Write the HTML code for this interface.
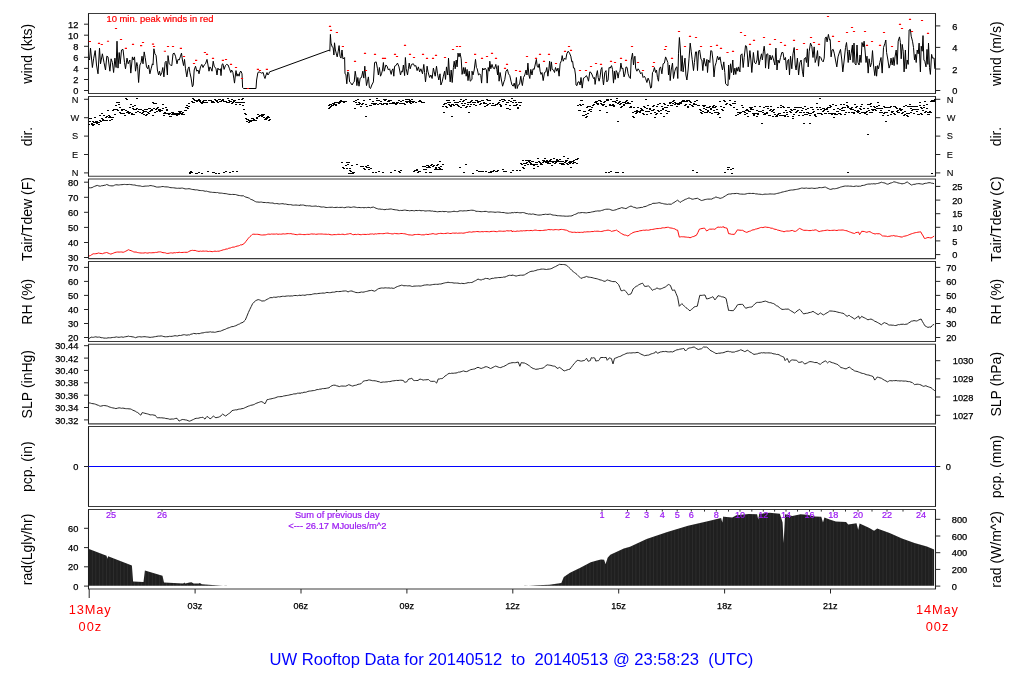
<!DOCTYPE html>
<html><head><meta charset="utf-8"><title>UW Rooftop Data</title>
<style>
html,body{margin:0;padding:0;background:#fff;}
svg{display:block;will-change:transform;opacity:0.999;font-family:"Liberation Sans",sans-serif;}
text{white-space:pre;font-kerning:none;}
</style></head><body>
<svg width="1024" height="700" viewBox="0 0 1024 700">
<defs>
<pattern id="bars" x="89.2" y="0" width="3.53" height="10" patternUnits="userSpaceOnUse">
<rect x="0" y="0" width="3.53" height="10" fill="#1f1f1f"/>
<rect x="2.95" y="0" width="0.58" height="10" fill="#343434"/>
</pattern>
</defs>
<rect x="0" y="0" width="1024" height="700" fill="#fff"/>
<path d="M88.0 13.50H936.0M88.0 93.50H936.0" fill="none" stroke="#3c3c3c" stroke-width="1.05"/>
<path d="M88.5 13.50V93.50M935.5 13.50V93.50" fill="none" stroke="#1c1c1c" stroke-width="1.05"/>
<path d="M88.0 96.50H936.0M88.0 176.30H936.0" fill="none" stroke="#3c3c3c" stroke-width="1.05"/>
<path d="M88.5 96.50V176.30M935.5 96.50V176.30" fill="none" stroke="#1c1c1c" stroke-width="1.05"/>
<path d="M88.0 179.00H936.0M88.0 258.60H936.0" fill="none" stroke="#3c3c3c" stroke-width="1.05"/>
<path d="M88.5 179.00V258.60M935.5 179.00V258.60" fill="none" stroke="#1c1c1c" stroke-width="1.05"/>
<path d="M88.0 261.50H936.0M88.0 341.45H936.0" fill="none" stroke="#3c3c3c" stroke-width="1.05"/>
<path d="M88.5 261.50V341.45M935.5 261.50V341.45" fill="none" stroke="#1c1c1c" stroke-width="1.05"/>
<path d="M88.0 344.20H936.0M88.0 423.85H936.0" fill="none" stroke="#3c3c3c" stroke-width="1.05"/>
<path d="M88.5 344.20V423.85M935.5 344.20V423.85" fill="none" stroke="#1c1c1c" stroke-width="1.05"/>
<path d="M88.0 426.50H936.0M88.0 506.45H936.0" fill="none" stroke="#3c3c3c" stroke-width="1.05"/>
<path d="M88.5 426.50V506.45M935.5 426.50V506.45" fill="none" stroke="#1c1c1c" stroke-width="1.05"/>
<path d="M88.0 509.40H936.0M88.0 589.00H936.0" fill="none" stroke="#3c3c3c" stroke-width="1.05"/>
<path d="M88.5 509.40V589.00M935.5 509.40V589.00" fill="none" stroke="#1c1c1c" stroke-width="1.05"/>
<path d="M84 90.5H88.5" stroke="#262626" stroke-width="1"/>
<text x="78.40" y="94.10" font-size="8.80" fill="#000" text-anchor="end" textLength="5.16" lengthAdjust="spacingAndGlyphs" stroke="#000" stroke-width="0.25">0</text>
<path d="M84 79.5H88.5" stroke="#262626" stroke-width="1"/>
<text x="78.40" y="83.05" font-size="8.80" fill="#000" text-anchor="end" textLength="5.16" lengthAdjust="spacingAndGlyphs" stroke="#000" stroke-width="0.25">2</text>
<path d="M84 68.4H88.5" stroke="#262626" stroke-width="1"/>
<text x="78.40" y="72.00" font-size="8.80" fill="#000" text-anchor="end" textLength="5.16" lengthAdjust="spacingAndGlyphs" stroke="#000" stroke-width="0.25">4</text>
<path d="M84 57.3H88.5" stroke="#262626" stroke-width="1"/>
<text x="78.40" y="60.95" font-size="8.80" fill="#000" text-anchor="end" textLength="5.16" lengthAdjust="spacingAndGlyphs" stroke="#000" stroke-width="0.25">6</text>
<path d="M84 46.3H88.5" stroke="#262626" stroke-width="1"/>
<text x="78.40" y="49.90" font-size="8.80" fill="#000" text-anchor="end" textLength="5.16" lengthAdjust="spacingAndGlyphs" stroke="#000" stroke-width="0.25">8</text>
<path d="M84 35.2H88.5" stroke="#262626" stroke-width="1"/>
<text x="78.40" y="38.85" font-size="8.80" fill="#000" text-anchor="end" textLength="10.33" lengthAdjust="spacingAndGlyphs" stroke="#000" stroke-width="0.25">10</text>
<path d="M84 24.2H88.5" stroke="#262626" stroke-width="1"/>
<text x="78.40" y="27.80" font-size="8.80" fill="#000" text-anchor="end" textLength="10.33" lengthAdjust="spacingAndGlyphs" stroke="#000" stroke-width="0.25">12</text>
<path d="M935.5 25.9H940.3" stroke="#262626" stroke-width="1"/>
<text x="952.20" y="29.50" font-size="8.80" fill="#000" text-anchor="start" textLength="5.16" lengthAdjust="spacingAndGlyphs" stroke="#000" stroke-width="0.25">6</text>
<path d="M935.5 47.4H940.3" stroke="#262626" stroke-width="1"/>
<text x="952.20" y="51.00" font-size="8.80" fill="#000" text-anchor="start" textLength="5.16" lengthAdjust="spacingAndGlyphs" stroke="#000" stroke-width="0.25">4</text>
<path d="M935.5 69.0H940.3" stroke="#262626" stroke-width="1"/>
<text x="952.20" y="72.60" font-size="8.80" fill="#000" text-anchor="start" textLength="5.16" lengthAdjust="spacingAndGlyphs" stroke="#000" stroke-width="0.25">2</text>
<path d="M935.5 90.5H940.3" stroke="#262626" stroke-width="1"/>
<text x="952.20" y="94.10" font-size="8.80" fill="#000" text-anchor="start" textLength="5.16" lengthAdjust="spacingAndGlyphs" stroke="#000" stroke-width="0.25">0</text>
<path d="M84 99.3H88.5" stroke="#262626" stroke-width="1"/>
<text x="75.00" y="102.50" font-size="8.80" fill="#000" text-anchor="middle" textLength="6.70" lengthAdjust="spacingAndGlyphs" stroke="#000" stroke-width="0.08">N</text>
<path d="M935.5 99.3H940.3" stroke="#262626" stroke-width="1"/>
<text x="946.80" y="102.50" font-size="8.80" fill="#000" text-anchor="start" textLength="6.70" lengthAdjust="spacingAndGlyphs" stroke="#000" stroke-width="0.08">N</text>
<path d="M84 117.7H88.5" stroke="#262626" stroke-width="1"/>
<text x="75.00" y="120.90" font-size="8.80" fill="#000" text-anchor="middle" textLength="8.76" lengthAdjust="spacingAndGlyphs" stroke="#000" stroke-width="0.08">W</text>
<path d="M935.5 117.7H940.3" stroke="#262626" stroke-width="1"/>
<text x="946.80" y="120.90" font-size="8.80" fill="#000" text-anchor="start" textLength="8.76" lengthAdjust="spacingAndGlyphs" stroke="#000" stroke-width="0.08">W</text>
<path d="M84 136.1H88.5" stroke="#262626" stroke-width="1"/>
<text x="75.00" y="139.30" font-size="8.80" fill="#000" text-anchor="middle" textLength="6.19" lengthAdjust="spacingAndGlyphs" stroke="#000" stroke-width="0.08">S</text>
<path d="M935.5 136.1H940.3" stroke="#262626" stroke-width="1"/>
<text x="946.80" y="139.30" font-size="8.80" fill="#000" text-anchor="start" textLength="6.19" lengthAdjust="spacingAndGlyphs" stroke="#000" stroke-width="0.08">S</text>
<path d="M84 154.5H88.5" stroke="#262626" stroke-width="1"/>
<text x="75.00" y="157.70" font-size="8.80" fill="#000" text-anchor="middle" textLength="6.19" lengthAdjust="spacingAndGlyphs" stroke="#000" stroke-width="0.08">E</text>
<path d="M935.5 154.5H940.3" stroke="#262626" stroke-width="1"/>
<text x="946.80" y="157.70" font-size="8.80" fill="#000" text-anchor="start" textLength="6.19" lengthAdjust="spacingAndGlyphs" stroke="#000" stroke-width="0.08">E</text>
<path d="M84 172.9H88.5" stroke="#262626" stroke-width="1"/>
<text x="75.00" y="176.10" font-size="8.80" fill="#000" text-anchor="middle" textLength="6.70" lengthAdjust="spacingAndGlyphs" stroke="#000" stroke-width="0.08">N</text>
<path d="M935.5 172.9H940.3" stroke="#262626" stroke-width="1"/>
<text x="946.80" y="176.10" font-size="8.80" fill="#000" text-anchor="start" textLength="6.70" lengthAdjust="spacingAndGlyphs" stroke="#000" stroke-width="0.08">N</text>
<path d="M84 182.2H88.5" stroke="#262626" stroke-width="1"/>
<text x="78.40" y="185.80" font-size="8.80" fill="#000" text-anchor="end" textLength="10.33" lengthAdjust="spacingAndGlyphs" stroke="#000" stroke-width="0.25">80</text>
<path d="M84 197.3H88.5" stroke="#262626" stroke-width="1"/>
<text x="78.40" y="200.87" font-size="8.80" fill="#000" text-anchor="end" textLength="10.33" lengthAdjust="spacingAndGlyphs" stroke="#000" stroke-width="0.25">70</text>
<path d="M84 212.3H88.5" stroke="#262626" stroke-width="1"/>
<text x="78.40" y="215.94" font-size="8.80" fill="#000" text-anchor="end" textLength="10.33" lengthAdjust="spacingAndGlyphs" stroke="#000" stroke-width="0.25">60</text>
<path d="M84 227.4H88.5" stroke="#262626" stroke-width="1"/>
<text x="78.40" y="231.01" font-size="8.80" fill="#000" text-anchor="end" textLength="10.33" lengthAdjust="spacingAndGlyphs" stroke="#000" stroke-width="0.25">50</text>
<path d="M84 242.5H88.5" stroke="#262626" stroke-width="1"/>
<text x="78.40" y="246.08" font-size="8.80" fill="#000" text-anchor="end" textLength="10.33" lengthAdjust="spacingAndGlyphs" stroke="#000" stroke-width="0.25">40</text>
<path d="M84 257.5H88.5" stroke="#262626" stroke-width="1"/>
<text x="78.40" y="261.15" font-size="8.80" fill="#000" text-anchor="end" textLength="10.33" lengthAdjust="spacingAndGlyphs" stroke="#000" stroke-width="0.25">30</text>
<path d="M935.5 186.4H940.3" stroke="#262626" stroke-width="1"/>
<text x="952.20" y="190.00" font-size="8.80" fill="#000" text-anchor="start" textLength="10.33" lengthAdjust="spacingAndGlyphs" stroke="#000" stroke-width="0.25">25</text>
<path d="M935.5 200.1H940.3" stroke="#262626" stroke-width="1"/>
<text x="952.20" y="203.70" font-size="8.80" fill="#000" text-anchor="start" textLength="10.33" lengthAdjust="spacingAndGlyphs" stroke="#000" stroke-width="0.25">20</text>
<path d="M935.5 213.7H940.3" stroke="#262626" stroke-width="1"/>
<text x="952.20" y="217.30" font-size="8.80" fill="#000" text-anchor="start" textLength="10.33" lengthAdjust="spacingAndGlyphs" stroke="#000" stroke-width="0.25">15</text>
<path d="M935.5 227.3H940.3" stroke="#262626" stroke-width="1"/>
<text x="952.20" y="230.90" font-size="8.80" fill="#000" text-anchor="start" textLength="10.33" lengthAdjust="spacingAndGlyphs" stroke="#000" stroke-width="0.25">10</text>
<path d="M935.5 240.9H940.3" stroke="#262626" stroke-width="1"/>
<text x="952.20" y="244.50" font-size="8.80" fill="#000" text-anchor="start" textLength="5.16" lengthAdjust="spacingAndGlyphs" stroke="#000" stroke-width="0.25">5</text>
<path d="M935.5 254.6H940.3" stroke="#262626" stroke-width="1"/>
<text x="952.20" y="258.20" font-size="8.80" fill="#000" text-anchor="start" textLength="5.16" lengthAdjust="spacingAndGlyphs" stroke="#000" stroke-width="0.25">0</text>
<path d="M84 267.4H88.5" stroke="#262626" stroke-width="1"/>
<text x="78.40" y="271.00" font-size="8.80" fill="#000" text-anchor="end" textLength="10.33" lengthAdjust="spacingAndGlyphs" stroke="#000" stroke-width="0.25">70</text>
<path d="M935.5 267.4H940.3" stroke="#262626" stroke-width="1"/>
<text x="946.20" y="271.00" font-size="8.80" fill="#000" text-anchor="start" textLength="10.33" lengthAdjust="spacingAndGlyphs" stroke="#000" stroke-width="0.25">70</text>
<path d="M84 281.4H88.5" stroke="#262626" stroke-width="1"/>
<text x="78.40" y="285.02" font-size="8.80" fill="#000" text-anchor="end" textLength="10.33" lengthAdjust="spacingAndGlyphs" stroke="#000" stroke-width="0.25">60</text>
<path d="M935.5 281.4H940.3" stroke="#262626" stroke-width="1"/>
<text x="946.20" y="285.02" font-size="8.80" fill="#000" text-anchor="start" textLength="10.33" lengthAdjust="spacingAndGlyphs" stroke="#000" stroke-width="0.25">60</text>
<path d="M84 295.4H88.5" stroke="#262626" stroke-width="1"/>
<text x="78.40" y="299.04" font-size="8.80" fill="#000" text-anchor="end" textLength="10.33" lengthAdjust="spacingAndGlyphs" stroke="#000" stroke-width="0.25">50</text>
<path d="M935.5 295.4H940.3" stroke="#262626" stroke-width="1"/>
<text x="946.20" y="299.04" font-size="8.80" fill="#000" text-anchor="start" textLength="10.33" lengthAdjust="spacingAndGlyphs" stroke="#000" stroke-width="0.25">50</text>
<path d="M84 309.5H88.5" stroke="#262626" stroke-width="1"/>
<text x="78.40" y="313.06" font-size="8.80" fill="#000" text-anchor="end" textLength="10.33" lengthAdjust="spacingAndGlyphs" stroke="#000" stroke-width="0.25">40</text>
<path d="M935.5 309.5H940.3" stroke="#262626" stroke-width="1"/>
<text x="946.20" y="313.06" font-size="8.80" fill="#000" text-anchor="start" textLength="10.33" lengthAdjust="spacingAndGlyphs" stroke="#000" stroke-width="0.25">40</text>
<path d="M84 323.5H88.5" stroke="#262626" stroke-width="1"/>
<text x="78.40" y="327.08" font-size="8.80" fill="#000" text-anchor="end" textLength="10.33" lengthAdjust="spacingAndGlyphs" stroke="#000" stroke-width="0.25">30</text>
<path d="M935.5 323.5H940.3" stroke="#262626" stroke-width="1"/>
<text x="946.20" y="327.08" font-size="8.80" fill="#000" text-anchor="start" textLength="10.33" lengthAdjust="spacingAndGlyphs" stroke="#000" stroke-width="0.25">30</text>
<path d="M84 337.5H88.5" stroke="#262626" stroke-width="1"/>
<text x="78.40" y="341.10" font-size="8.80" fill="#000" text-anchor="end" textLength="10.33" lengthAdjust="spacingAndGlyphs" stroke="#000" stroke-width="0.25">20</text>
<path d="M935.5 337.5H940.3" stroke="#262626" stroke-width="1"/>
<text x="946.20" y="341.10" font-size="8.80" fill="#000" text-anchor="start" textLength="10.33" lengthAdjust="spacingAndGlyphs" stroke="#000" stroke-width="0.25">20</text>
<path d="M84 345.7H88.5" stroke="#262626" stroke-width="1"/>
<text x="78.40" y="349.30" font-size="8.80" fill="#000" text-anchor="end" textLength="23.23" lengthAdjust="spacingAndGlyphs" stroke="#000" stroke-width="0.25">30.44</text>
<path d="M84 358.1H88.5" stroke="#262626" stroke-width="1"/>
<text x="78.40" y="361.67" font-size="8.80" fill="#000" text-anchor="end" textLength="23.23" lengthAdjust="spacingAndGlyphs" stroke="#000" stroke-width="0.25">30.42</text>
<path d="M84 370.4H88.5" stroke="#262626" stroke-width="1"/>
<text x="78.40" y="374.04" font-size="8.80" fill="#000" text-anchor="end" textLength="23.23" lengthAdjust="spacingAndGlyphs" stroke="#000" stroke-width="0.25">30.40</text>
<path d="M84 382.8H88.5" stroke="#262626" stroke-width="1"/>
<text x="78.40" y="386.41" font-size="8.80" fill="#000" text-anchor="end" textLength="23.23" lengthAdjust="spacingAndGlyphs" stroke="#000" stroke-width="0.25">30.38</text>
<path d="M84 395.2H88.5" stroke="#262626" stroke-width="1"/>
<text x="78.40" y="398.78" font-size="8.80" fill="#000" text-anchor="end" textLength="23.23" lengthAdjust="spacingAndGlyphs" stroke="#000" stroke-width="0.25">30.36</text>
<path d="M84 407.5H88.5" stroke="#262626" stroke-width="1"/>
<text x="78.40" y="411.15" font-size="8.80" fill="#000" text-anchor="end" textLength="23.23" lengthAdjust="spacingAndGlyphs" stroke="#000" stroke-width="0.25">30.34</text>
<path d="M84 419.9H88.5" stroke="#262626" stroke-width="1"/>
<text x="78.40" y="423.52" font-size="8.80" fill="#000" text-anchor="end" textLength="23.23" lengthAdjust="spacingAndGlyphs" stroke="#000" stroke-width="0.25">30.32</text>
<path d="M935.5 360.7H940.3" stroke="#262626" stroke-width="1"/>
<text x="952.80" y="364.30" font-size="8.80" fill="#000" text-anchor="start" textLength="20.65" lengthAdjust="spacingAndGlyphs" stroke="#000" stroke-width="0.25">1030</text>
<path d="M935.5 378.8H940.3" stroke="#262626" stroke-width="1"/>
<text x="952.80" y="382.40" font-size="8.80" fill="#000" text-anchor="start" textLength="20.65" lengthAdjust="spacingAndGlyphs" stroke="#000" stroke-width="0.25">1029</text>
<path d="M935.5 397.0H940.3" stroke="#262626" stroke-width="1"/>
<text x="952.80" y="400.60" font-size="8.80" fill="#000" text-anchor="start" textLength="20.65" lengthAdjust="spacingAndGlyphs" stroke="#000" stroke-width="0.25">1028</text>
<path d="M935.5 415.3H940.3" stroke="#262626" stroke-width="1"/>
<text x="952.80" y="418.90" font-size="8.80" fill="#000" text-anchor="start" textLength="20.65" lengthAdjust="spacingAndGlyphs" stroke="#000" stroke-width="0.25">1027</text>
<path d="M84 466.5H88.5" stroke="#262626" stroke-width="1"/>
<text x="78.40" y="470.10" font-size="8.80" fill="#000" text-anchor="end" textLength="5.16" lengthAdjust="spacingAndGlyphs" stroke="#000" stroke-width="0.25">0</text>
<path d="M935.5 466.5H940.3" stroke="#262626" stroke-width="1"/>
<text x="945.80" y="470.10" font-size="8.80" fill="#000" text-anchor="start" textLength="5.16" lengthAdjust="spacingAndGlyphs" stroke="#000" stroke-width="0.25">0</text>
<path d="M84 528.3H88.5" stroke="#262626" stroke-width="1"/>
<text x="78.40" y="531.90" font-size="8.80" fill="#000" text-anchor="end" textLength="10.33" lengthAdjust="spacingAndGlyphs" stroke="#000" stroke-width="0.25">60</text>
<path d="M84 547.6H88.5" stroke="#262626" stroke-width="1"/>
<text x="78.40" y="551.17" font-size="8.80" fill="#000" text-anchor="end" textLength="10.33" lengthAdjust="spacingAndGlyphs" stroke="#000" stroke-width="0.25">40</text>
<path d="M84 566.8H88.5" stroke="#262626" stroke-width="1"/>
<text x="78.40" y="570.44" font-size="8.80" fill="#000" text-anchor="end" textLength="10.33" lengthAdjust="spacingAndGlyphs" stroke="#000" stroke-width="0.25">20</text>
<path d="M84 586.1H88.5" stroke="#262626" stroke-width="1"/>
<text x="78.40" y="589.71" font-size="8.80" fill="#000" text-anchor="end" textLength="5.16" lengthAdjust="spacingAndGlyphs" stroke="#000" stroke-width="0.25">0</text>
<path d="M935.5 519.3H940.3" stroke="#262626" stroke-width="1"/>
<text x="951.80" y="522.90" font-size="8.80" fill="#000" text-anchor="start" textLength="15.49" lengthAdjust="spacingAndGlyphs" stroke="#000" stroke-width="0.25">800</text>
<path d="M935.5 536.0H940.3" stroke="#262626" stroke-width="1"/>
<text x="951.80" y="539.60" font-size="8.80" fill="#000" text-anchor="start" textLength="15.49" lengthAdjust="spacingAndGlyphs" stroke="#000" stroke-width="0.25">600</text>
<path d="M935.5 552.7H940.3" stroke="#262626" stroke-width="1"/>
<text x="951.80" y="556.30" font-size="8.80" fill="#000" text-anchor="start" textLength="15.49" lengthAdjust="spacingAndGlyphs" stroke="#000" stroke-width="0.25">400</text>
<path d="M935.5 569.4H940.3" stroke="#262626" stroke-width="1"/>
<text x="951.80" y="573.00" font-size="8.80" fill="#000" text-anchor="start" textLength="15.49" lengthAdjust="spacingAndGlyphs" stroke="#000" stroke-width="0.25">200</text>
<path d="M935.5 586.1H940.3" stroke="#262626" stroke-width="1"/>
<text x="951.80" y="589.70" font-size="8.80" fill="#000" text-anchor="start" textLength="5.16" lengthAdjust="spacingAndGlyphs" stroke="#000" stroke-width="0.25">0</text>
<text x="32.00" y="53.70" font-size="14.00" fill="#000" text-anchor="middle" textLength="59.90" lengthAdjust="spacingAndGlyphs" transform="rotate(-90 32.00 53.70)">wind (kts)</text>
<text x="1000.70" y="53.70" font-size="14.00" fill="#000" text-anchor="middle" textLength="64.56" lengthAdjust="spacingAndGlyphs" transform="rotate(-90 1000.70 53.70)">wind (m/s)</text>
<text x="32.00" y="136.60" font-size="14.00" fill="#000" text-anchor="middle" textLength="19.45" lengthAdjust="spacingAndGlyphs" transform="rotate(-90 32.00 136.60)">dir.</text>
<text x="1000.70" y="136.60" font-size="14.00" fill="#000" text-anchor="middle" textLength="19.45" lengthAdjust="spacingAndGlyphs" transform="rotate(-90 1000.70 136.60)">dir.</text>
<text x="32.00" y="219.00" font-size="14.00" fill="#000" text-anchor="middle" textLength="84.00" lengthAdjust="spacingAndGlyphs" transform="rotate(-90 32.00 219.00)">Tair/Tdew (F)</text>
<text x="1000.70" y="219.00" font-size="14.00" fill="#000" text-anchor="middle" textLength="85.56" lengthAdjust="spacingAndGlyphs" transform="rotate(-90 1000.70 219.00)">Tair/Tdew (C)</text>
<text x="32.00" y="301.68" font-size="14.00" fill="#000" text-anchor="middle" textLength="45.88" lengthAdjust="spacingAndGlyphs" transform="rotate(-90 32.00 301.68)">RH (%)</text>
<text x="1000.70" y="301.68" font-size="14.00" fill="#000" text-anchor="middle" textLength="45.88" lengthAdjust="spacingAndGlyphs" transform="rotate(-90 1000.70 301.68)">RH (%)</text>
<text x="32.00" y="384.22" font-size="14.00" fill="#000" text-anchor="middle" textLength="68.47" lengthAdjust="spacingAndGlyphs" transform="rotate(-90 32.00 384.22)">SLP (inHg)</text>
<text x="1000.70" y="384.22" font-size="14.00" fill="#000" text-anchor="middle" textLength="64.59" lengthAdjust="spacingAndGlyphs" transform="rotate(-90 1000.70 384.22)">SLP (hPa)</text>
<text x="32.00" y="466.68" font-size="14.00" fill="#000" text-anchor="middle" textLength="50.57" lengthAdjust="spacingAndGlyphs" transform="rotate(-90 32.00 466.68)">pcp. (in)</text>
<text x="1000.70" y="466.68" font-size="14.00" fill="#000" text-anchor="middle" textLength="63.00" lengthAdjust="spacingAndGlyphs" transform="rotate(-90 1000.70 466.68)">pcp. (mm)</text>
<text x="32.00" y="549.40" font-size="14.00" fill="#000" text-anchor="middle" textLength="71.58" lengthAdjust="spacingAndGlyphs" transform="rotate(-90 32.00 549.40)">rad(Lgly/hr)</text>
<text x="1000.70" y="549.40" font-size="14.00" fill="#000" text-anchor="middle" textLength="76.57" lengthAdjust="spacingAndGlyphs" transform="rotate(-90 1000.70 549.40)">rad (W/m^2)</text>
<path d="M89.5 60.0 L90.5 48.1 L92.4 67.5 L93.6 58.8 L95.2 50.6 L96.5 65.0 L98.0 73.8 L99.5 48.1 L100.5 63.8 L102.4 53.8 L104.0 62.5 L105.5 70.0 L106.8 56.2 L108.0 56.9 L109.9 71.2 L111.1 58.8 L112.4 62.5 L113.6 72.5 L114.9 58.1 L116.1 67.5 L117.0 41.2 L118.0 68.1 L119.2 52.5 L120.2 63.8 L121.5 50.0 L123.0 49.4 L124.5 62.5 L125.5 68.8 L127.0 58.1 L128.2 63.8 L129.9 60.0 L130.8 73.1 L132.4 56.9 L133.2 60.0 L134.5 56.9 L135.5 71.2 L136.8 62.5 L137.6 66.2 L138.6 82.5 L139.9 65.0 L141.1 62.5 L142.0 56.2 L143.0 63.8 L144.2 51.9 L145.2 57.5 L146.5 66.9 L147.8 68.8 L148.6 65.0 L149.9 73.8 L151.1 68.8 L152.4 63.8 L153.0 65.0 L153.9 48.8 L154.9 53.8 L156.1 55.6 L157.4 70.0 L158.6 75.0 L159.5 71.2 L160.5 75.6 L161.8 72.5 L162.8 67.5 L163.9 76.9 L165.1 62.5 L166.1 61.2 L167.4 75.0 L168.0 55.6 L169.2 63.8 L170.5 65.0 L171.8 65.6 L173.0 53.8 L174.2 53.1 L175.5 56.2 L177.0 63.8 L178.0 59.4 L179.2 60.0 L180.5 56.2 L181.5 53.1 L182.4 60.0 L183.6 65.6 L184.5 59.4 L185.5 68.8 L186.8 76.9 L188.0 68.8 L189.0 66.9 L189.9 72.5 L191.1 78.1 L192.4 86.9 L193.2 85.0 L194.2 70.0 L195.5 66.2 L196.8 71.2 L198.0 70.0 L199.0 73.8 L200.5 66.9 L201.8 64.4 L203.0 67.5 L204.2 65.0 L205.5 63.8 L207.0 59.4 L208.0 65.0 L209.0 71.2 L209.9 66.9 L211.1 68.8 L212.0 71.2 L213.2 61.2 L214.2 66.2 L216.0 68.8 L216.0 68.8 L217.0 75.0 L217.9 68.1 L219.1 70.0 L220.4 68.8 L221.0 75.6 L222.0 64.4 L222.9 63.8 L224.1 69.4 L225.4 65.6 L226.6 64.4 L228.1 65.0 L229.5 68.8 L230.8 72.5 L231.6 70.0 L232.9 72.5 L233.8 78.1 L234.5 83.1 L235.4 75.0 L236.0 70.6 L237.0 76.2 L237.9 73.8 L239.1 76.2 L240.0 71.9 L241.0 71.2 L242.0 73.8 L242.6 87.5 L243.5 88.5 L256.0 88.5 L256.6 80.0 L257.9 72.5 L259.1 71.9 L260.4 72.5 L261.6 73.1 L263.2 72.5 L264.1 76.2 L265.0 78.5 L266.0 75.0 L267.0 72.5 L267.9 75.0 L268.8 73.8 L269.5 71.9 L329.1 50.2 L329.8 51.2 L330.4 34.4 L331.0 43.1 L332.2 46.9 L333.1 47.5 L333.9 55.0 L334.5 42.8 L335.4 50.0 L336.2 53.1 L337.2 56.9 L338.2 51.2 L339.1 45.6 L340.0 56.2 L341.0 58.1 L342.0 50.0 L342.9 58.8 L344.0 58.1 L344.0 58.1 L344.6 57.5 L345.0 73.8 L345.9 74.4 L346.8 83.8 L347.8 71.9 L348.8 73.8 L349.6 81.9 L350.9 83.1 L352.1 85.0 L353.4 82.5 L354.2 81.9 L355.2 71.2 L356.1 76.9 L356.9 85.6 L357.8 77.5 L359.0 86.2 L360.2 78.1 L361.5 77.5 L362.8 71.2 L363.8 78.1 L364.8 66.2 L365.5 75.0 L366.5 85.6 L367.5 81.2 L368.4 76.9 L369.4 87.5 L370.5 88.5 L371.8 85.0 L373.4 81.9 L374.6 62.5 L376.2 61.9 L377.5 68.8 L378.4 75.0 L379.4 67.5 L380.5 76.2 L381.5 73.8 L382.5 70.0 L383.4 62.5 L384.2 71.2 L385.9 65.0 L387.1 66.2 L388.4 70.0 L389.6 68.8 L391.2 74.4 L392.1 70.0 L393.0 68.8 L393.8 76.2 L394.6 66.2 L395.9 65.6 L397.5 63.1 L399.0 66.9 L400.5 75.0 L401.5 71.2 L402.5 71.9 L403.4 65.0 L404.6 75.6 L405.4 57.5 L406.2 68.8 L407.5 75.0 L408.4 68.8 L409.2 63.1 L410.2 68.8 L411.5 64.4 L413.4 63.8 L414.6 66.2 L415.9 65.6 L417.1 70.6 L418.4 66.9 L419.6 71.9 L420.9 68.8 L422.5 73.8 L423.8 64.4 L424.6 72.5 L425.5 81.9 L426.5 72.5 L427.1 66.2 L428.0 71.9 L429.6 77.5 L430.9 75.0 L432.1 78.5 L433.4 68.1 L434.2 71.9 L435.2 76.2 L436.5 66.2 L437.5 73.8 L438.8 80.0 L440.0 73.8 L440.9 85.0 L442.1 81.9 L443.4 76.2 L444.6 71.2 L445.5 79.4 L446.5 66.9 L447.8 75.0 L448.5 58.1 L449.4 73.1 L450.2 81.9 L451.2 70.0 L452.2 82.5 L453.4 67.5 L454.2 61.2 L455.2 68.8 L456.2 60.0 L457.1 66.9 L458.0 53.1 L459.0 56.9 L460.0 53.1 L461.2 58.8 L462.1 74.4 L463.4 67.5 L464.2 73.8 L465.2 67.5 L466.2 76.2 L467.1 69.4 L468.0 80.6 L469.2 71.2 L470.2 81.2 L472.0 79.4 L472.0 71.2 L473.0 75.0 L474.2 70.0 L475.5 59.4 L476.4 67.5 L477.2 68.8 L478.5 75.0 L479.8 73.8 L480.8 75.6 L481.6 83.1 L482.6 68.1 L483.9 70.0 L485.1 68.1 L486.4 70.0 L487.2 83.1 L488.2 67.5 L489.2 71.2 L489.8 61.2 L490.8 68.8 L492.0 64.4 L493.2 68.1 L494.5 68.8 L495.8 64.4 L496.8 69.4 L497.6 75.0 L498.2 65.6 L499.1 81.2 L500.1 72.5 L501.4 80.0 L502.6 86.2 L503.9 81.9 L504.8 79.4 L506.0 71.2 L507.4 69.4 L508.5 73.8 L509.8 75.6 L511.0 81.2 L512.0 85.0 L513.2 86.2 L514.2 83.1 L515.4 88.5 L516.4 77.5 L517.2 88.5 L518.2 85.0 L519.5 84.4 L520.8 76.2 L521.8 83.1 L522.4 85.6 L523.5 77.5 L524.8 75.0 L526.0 70.0 L527.0 75.0 L527.9 63.1 L528.9 75.0 L529.8 78.5 L530.8 69.4 L532.0 75.0 L533.0 68.8 L534.2 69.4 L535.1 65.0 L536.4 59.4 L537.2 66.2 L538.2 67.5 L539.2 63.8 L540.1 71.2 L541.0 74.4 L542.0 72.5 L543.2 80.6 L544.5 72.5 L545.8 71.9 L546.8 67.5 L547.9 76.2 L548.9 68.8 L549.6 61.2 L550.5 71.2 L551.4 61.9 L552.2 69.4 L553.5 70.0 L554.5 72.5 L555.5 67.5 L556.8 71.2 L558.0 68.1 L559.1 76.2 L560.1 63.8 L561.4 60.6 L562.2 55.6 L563.2 61.2 L564.5 58.1 L565.8 59.4 L566.8 53.8 L568.2 51.2 L569.5 53.1 L570.8 56.2 L571.8 61.9 L572.6 61.2 L573.5 68.1 L574.5 68.1 L575.5 75.0 L576.0 85.0 L577.0 85.6 L578.0 81.9 L579.2 81.9 L580.1 85.0 L581.0 77.5 L582.2 88.1 L583.5 78.1 L584.8 77.5 L586.4 75.6 L587.6 78.1 L588.5 81.2 L589.8 71.9 L591.0 72.5 L592.2 75.0 L593.5 78.5 L594.5 77.5 L595.1 84.4 L596.4 75.0 L597.4 70.6 L598.2 77.5 L599.1 81.2 L600.0 77.5 L600.0 77.5 L601.0 69.4 L601.9 67.5 L602.8 79.4 L603.5 85.0 L604.8 72.5 L606.0 70.6 L606.9 81.9 L608.1 80.0 L609.0 67.5 L610.2 68.1 L611.5 65.6 L612.5 69.4 L613.5 83.1 L614.4 71.2 L615.2 79.4 L616.2 70.6 L617.2 72.5 L618.1 78.1 L619.0 72.5 L620.0 71.2 L620.9 63.1 L621.9 68.8 L622.9 68.1 L624.0 76.9 L625.0 73.8 L626.0 66.9 L627.1 67.5 L628.1 73.8 L629.4 77.5 L630.4 78.5 L631.2 60.0 L632.5 53.1 L633.5 65.0 L634.4 56.9 L635.0 56.2 L635.6 68.1 L636.9 71.2 L638.1 68.8 L639.4 70.6 L640.6 73.8 L641.9 72.5 L643.1 77.5 L644.4 76.2 L645.6 78.5 L646.9 82.5 L648.1 78.1 L649.4 81.2 L650.6 88.1 L651.5 87.5 L652.5 72.5 L653.5 71.2 L654.4 67.5 L655.6 72.5 L656.5 70.0 L657.5 77.5 L658.5 81.2 L659.4 68.8 L660.6 66.9 L661.9 73.8 L663.1 63.8 L664.4 63.1 L665.6 56.9 L666.9 60.0 L667.8 62.5 L668.5 75.0 L669.4 65.0 L670.2 80.6 L671.2 70.0 L672.5 63.1 L673.5 78.5 L674.8 71.2 L676.0 67.5 L676.9 66.9 L677.8 78.5 L678.5 53.8 L679.4 37.5 L680.4 50.0 L681.2 71.2 L682.1 55.6 L683.1 71.9 L684.0 65.0 L685.0 58.1 L685.9 75.0 L686.9 80.0 L688.1 70.0 L689.0 58.8 L690.2 43.1 L691.2 51.2 L692.2 59.4 L693.5 70.6 L694.4 62.5 L695.6 51.9 L696.5 51.9 L697.5 70.6 L698.5 51.2 L699.6 50.0 L701.0 59.4 L701.9 60.0 L702.8 70.6 L704.0 58.1 L705.0 63.1 L705.9 66.2 L706.9 59.4 L707.5 72.5 L708.5 60.0 L709.8 62.5 L710.8 50.6 L711.9 51.2 L712.9 60.0 L714.0 76.9 L715.0 66.2 L716.2 62.5 L717.5 56.2 L718.8 60.0 L720.0 56.9 L721.2 63.8 L722.5 70.0 L723.8 61.9 L724.8 72.5 L725.6 83.8 L726.9 85.0 L728.0 85.6 L728.0 85.6 L728.6 65.0 L729.5 79.4 L730.5 63.8 L731.5 72.5 L732.8 60.0 L733.6 75.0 L734.9 68.1 L735.8 74.4 L736.8 67.5 L737.8 71.2 L738.6 66.9 L739.9 71.9 L740.8 55.0 L742.0 53.8 L743.2 67.5 L744.2 57.5 L745.5 45.6 L746.5 46.2 L747.4 55.0 L748.2 66.9 L749.2 58.1 L749.9 50.6 L750.9 60.0 L751.8 72.5 L752.8 60.0 L753.4 52.5 L754.5 62.5 L755.8 63.8 L757.0 60.0 L757.8 50.6 L759.0 65.0 L760.2 59.4 L761.5 53.8 L762.4 60.0 L763.4 51.2 L764.2 46.2 L765.1 55.0 L765.5 68.1 L766.5 54.4 L767.8 53.8 L768.6 68.8 L769.9 55.0 L771.1 60.0 L772.4 55.6 L773.6 60.0 L774.9 65.0 L775.9 48.1 L777.0 70.0 L778.0 60.0 L779.2 63.1 L780.5 57.5 L781.8 52.5 L783.0 52.5 L784.2 60.0 L785.5 57.5 L786.5 70.0 L787.4 61.2 L788.6 59.4 L789.5 75.0 L790.5 56.2 L791.8 68.8 L793.0 53.8 L794.2 47.5 L795.2 65.0 L796.1 70.0 L797.4 58.1 L798.6 75.0 L799.9 62.5 L801.1 60.0 L802.4 71.2 L803.4 76.9 L804.2 58.8 L805.5 57.5 L806.5 62.5 L807.4 48.8 L808.2 66.9 L809.2 51.2 L810.5 43.1 L811.8 46.2 L813.0 57.5 L814.2 46.9 L815.2 62.5 L816.5 58.1 L817.5 50.6 L818.5 66.2 L819.5 56.2 L820.8 57.5 L822.0 60.6 L823.2 61.9 L824.2 58.1 L825.2 38.1 L826.2 36.9 L827.1 41.9 L828.4 34.4 L829.5 40.0 L830.2 39.4 L831.1 56.9 L832.0 50.0 L833.2 49.4 L834.2 53.1 L835.5 60.0 L836.8 66.9 L838.0 56.9 L839.2 53.1 L840.5 49.4 L841.8 60.0 L842.8 71.9 L844.2 60.0 L845.5 47.5 L846.5 42.5 L847.4 51.2 L848.2 62.5 L849.2 50.0 L850.2 60.0 L851.1 53.8 L852.4 45.0 L853.0 62.5 L854.0 43.1 L855.0 63.8 L856.0 65.0 L856.0 65.0 L857.0 45.0 L857.9 62.5 L859.1 65.0 L860.0 55.0 L861.0 62.5 L862.0 42.5 L863.2 46.9 L864.1 41.2 L865.0 50.0 L866.0 62.5 L867.0 56.2 L868.2 73.1 L869.1 58.8 L870.4 66.9 L871.6 62.5 L872.5 50.6 L873.5 65.0 L874.8 75.6 L875.8 66.2 L876.6 76.2 L877.5 65.6 L878.5 68.8 L879.8 62.5 L881.0 57.5 L882.2 73.1 L883.5 47.5 L884.8 43.8 L885.8 40.0 L886.6 52.5 L887.9 60.0 L889.1 68.1 L890.4 63.8 L891.0 58.1 L892.2 65.0 L893.2 57.5 L894.1 65.6 L895.0 56.9 L896.2 50.0 L897.2 64.4 L898.2 41.2 L899.5 36.9 L900.4 42.5 L901.2 58.8 L902.2 44.4 L903.2 51.2 L904.1 71.9 L905.4 50.0 L906.2 68.8 L907.2 60.0 L908.2 64.4 L909.1 30.0 L910.4 29.4 L911.2 36.2 L912.5 41.2 L913.5 47.5 L914.5 60.0 L915.4 54.4 L916.2 62.5 L917.2 50.0 L918.2 53.8 L919.1 43.1 L920.4 71.9 L921.2 46.2 L922.2 51.2 L923.0 35.6 L923.9 60.0 L924.8 61.2 L926.0 66.9 L927.0 49.4 L927.9 64.4 L928.5 43.1 L929.5 67.5 L930.4 74.4 L931.6 54.4 L932.5 58.1 L934.1 58.1 L934.8 68.8" fill="none" stroke="#000" stroke-width="1.0" stroke-linejoin="round"/>
<path d="M88.8 41.5h2.2M97.9 43.4h2.2M100.7 44.5h2.2M106.9 41.2h2.2M114.9 28.5h2.2M119.9 39.5h2.2M124.8 48.4h2.2M131.9 44.4h2.2M140.0 45.6h2.2M141.9 42.5h2.2M151.9 44.1h2.2M152.9 46.5h2.2M163.8 51.2h2.2M166.9 46.5h2.2M171.9 46.5h2.2M179.8 48.4h2.2M182.9 56.5h2.2M192.9 63.5h2.2M195.0 60.4h2.2M203.8 52.5h2.2M205.9 54.4h2.2M211.9 58.4h2.2M221.8 60.4h2.2M224.9 59.5h2.2M229.9 64.4h2.2M234.9 67.5h2.2M240.9 78.5h2.2M246.9 88.5h2.2M256.8 69.4h2.2M258.9 70.5h2.2M265.8 69.4h2.2M328.9 26.4h2.2M329.9 30.4h2.2M335.8 32.5h2.2M341.8 46.5h2.2M346.9 70.5h2.2M353.9 61.4h2.2M363.9 53.4h2.2M364.9 70.5h2.2M373.9 54.4h2.2M381.9 58.4h2.2M383.9 58.4h2.2M393.9 54.4h2.2M395.9 56.5h2.2M403.9 45.4h2.2M408.9 54.4h2.2M412.9 57.5h2.2M421.9 54.4h2.2M425.9 58.4h2.2M431.9 58.4h2.2M434.9 55.4h2.2M443.9 57.5h2.2M451.9 49.5h2.2M455.9 46.5h2.2M458.9 46.5h2.2M464.9 62.5h2.2M474.0 54.4h2.2M480.9 58.4h2.2M485.9 56.5h2.2M490.9 53.4h2.2M494.9 58.4h2.2M503.9 68.4h2.2M505.9 64.4h2.2M514.9 70.5h2.2M518.9 71.4h2.2M525.9 56.5h2.2M534.9 58.4h2.2M538.9 54.4h2.2M542.9 61.4h2.2M547.9 54.4h2.2M554.9 63.5h2.2M563.9 51.4h2.2M567.9 46.5h2.2M569.9 50.4h2.2M578.9 70.5h2.2M584.9 70.5h2.2M589.9 66.5h2.2M594.9 63.5h2.2M599.9 64.4h2.2M609.9 61.4h2.2M613.9 62.5h2.2M619.9 58.4h2.2M624.9 60.4h2.2M630.9 46.5h2.2M636.9 62.5h2.2M641.9 70.5h2.2M652.9 62.5h2.2M651.9 66.5h2.2M664.9 46.5h2.2M663.9 49.5h2.2M670.9 58.4h2.2M677.9 31.5h2.2M683.9 46.5h2.2M688.9 36.4h2.2M694.9 37.5h2.2M699.9 46.5h2.2M709.9 46.5h2.2M715.9 45.4h2.2M719.9 48.4h2.2M726.4 52.5h2.2M731.9 51.4h2.2M739.9 32.5h2.2M743.9 35.5h2.2M748.9 44.4h2.2M752.9 40.4h2.2M762.9 37.5h2.2M768.9 44.4h2.2M773.9 39.5h2.2M779.9 42.5h2.2M783.9 45.4h2.2M792.9 40.4h2.2M795.9 49.5h2.2M802.9 43.5h2.2M809.9 37.5h2.2M812.9 42.5h2.2M817.9 44.4h2.2M826.9 16.5h2.2M831.9 36.4h2.2M837.9 41.5h2.2M845.9 32.5h2.2M850.9 27.5h2.2M852.9 31.5h2.2M863.9 31.5h2.2M865.9 45.4h2.2M870.9 41.5h2.2M878.9 45.4h2.2M882.9 32.5h2.2M890.9 46.5h2.2M898.9 24.4h2.2M900.9 28.5h2.2M908.9 19.4h2.2M910.9 31.5h2.2M920.9 20.5h2.2M926.9 33.4h2.2" stroke="#ff0000" stroke-width="1.1" fill="none"/>
<text x="106.40" y="22.40" font-size="9.10" fill="#ff0000" text-anchor="start" textLength="107.00" lengthAdjust="spacingAndGlyphs" stroke="#ff0000" stroke-width="0.2">10 min. peak winds in red</text>
<path d="M88.0 124.5h2M89.0 121.5h2M89.0 118.5h2M90.0 118.5h2M91.0 124.5h2M91.0 123.5h2M92.0 125.5h2M92.0 121.5h2M93.0 124.5h2M93.0 122.5h2M94.0 117.5h2M95.0 122.5h2M95.0 121.5h2M96.0 123.5h2M96.0 121.5h2M97.0 122.5h2M98.0 124.5h2M98.0 122.5h2M99.0 115.5h2M99.0 120.5h2M100.0 121.5h2M101.0 118.5h2M101.0 113.5h2M102.0 120.5h2M102.0 119.5h2M103.0 120.5h2M103.0 115.5h2M104.0 120.5h2M105.0 117.5h2M105.0 117.5h2M106.0 120.5h2M106.0 116.5h2M107.0 110.5h2M108.0 115.5h2M108.0 117.5h2M109.0 116.5h2M109.0 120.5h2M110.0 117.5h2M111.0 119.5h2M111.0 117.5h2M112.0 117.5h2M112.0 110.5h2M113.0 109.5h2M113.0 109.5h2M114.0 114.5h2M115.0 105.5h2M115.0 109.5h2M116.0 102.5h2M116.0 109.5h2M117.0 110.5h2M118.0 102.5h2M118.0 104.5h2M119.0 112.5h2M119.0 107.5h2M120.0 113.5h2M121.0 110.5h2M121.0 109.5h2M122.0 113.5h2M122.0 109.5h2M123.0 109.5h2M123.0 113.5h2M124.0 115.5h2M125.0 98.5h2M125.0 110.5h2M126.0 112.5h2M126.0 99.5h2M127.0 111.5h2M128.0 112.5h2M128.0 113.5h2M129.0 112.5h2M129.0 107.5h2M130.0 104.5h2M131.0 114.5h2M131.0 113.5h2M132.0 106.5h2M132.0 108.5h2M133.0 109.5h2M133.0 114.5h2M134.0 105.5h2M135.0 112.5h2M135.0 109.5h2M136.0 108.5h2M136.0 98.5h2M137.0 111.5h2M138.0 109.5h2M138.0 109.5h2M139.0 112.5h2M139.0 112.5h2M140.0 109.5h2M141.0 113.5h2M141.0 113.5h2M142.0 110.5h2M142.0 112.5h2M143.0 111.5h2M143.0 114.5h2M144.0 109.5h2M145.0 115.5h2M145.0 111.5h2M146.0 109.5h2M146.0 114.5h2M147.0 112.5h2M148.0 113.5h2M148.0 108.5h2M149.0 108.5h2M149.0 111.5h2M150.0 110.5h2M151.0 109.5h2M151.0 110.5h2M152.0 102.5h2M152.0 115.5h2M153.0 108.5h2M153.0 103.5h2M154.0 112.5h2M155.0 109.5h2M155.0 103.5h2M156.0 111.5h2M156.0 108.5h2M157.0 107.5h2M158.0 109.5h2M158.0 110.5h2M159.0 111.5h2M159.0 109.5h2M160.0 110.5h2M161.0 110.5h2M161.0 110.5h2M162.0 108.5h2M162.0 104.5h2M163.0 115.5h2M163.0 113.5h2M164.0 112.5h2M165.0 113.5h2M165.0 107.5h2M166.0 109.5h2M166.0 110.5h2M167.0 113.5h2M168.0 113.5h2M168.0 114.5h2M169.0 113.5h2M169.0 116.5h2M170.0 116.5h2M171.0 112.5h2M171.0 114.5h2M172.0 112.5h2M172.0 113.5h2M173.0 113.5h2M173.0 114.5h2M174.0 114.5h2M175.0 113.5h2M175.0 114.5h2M176.0 115.5h2M176.0 114.5h2M177.0 113.5h2M178.0 114.5h2M178.0 111.5h2M179.0 112.5h2M179.0 113.5h2M180.0 111.5h2M181.0 113.5h2M181.0 114.5h2M182.0 114.5h2M182.0 112.5h2M183.0 114.5h2M183.0 114.5h2M184.0 110.5h2M185.0 110.5h2M185.0 107.5h2M186.0 107.5h2M186.0 105.5h2M187.0 108.5h2M188.0 106.5h2M188.0 103.5h2M189.0 173.5h2M189.0 172.5h2M190.0 171.5h2M191.0 101.5h2M191.0 172.5h2M192.0 102.5h2M192.0 98.5h2M193.0 102.5h2M193.0 99.5h2M194.0 100.5h2M195.0 100.5h2M195.0 173.5h2M196.0 173.5h2M196.0 101.5h2M197.0 100.5h2M198.0 172.5h2M198.0 99.5h2M199.0 100.5h2M199.0 101.5h2M200.0 102.5h2M201.0 173.5h2M201.0 103.5h2M202.0 102.5h2M202.0 101.5h2M203.0 102.5h2M203.0 100.5h2M204.0 102.5h2M205.0 100.5h2M205.0 100.5h2M206.0 102.5h2M206.0 102.5h2M207.0 171.5h2M208.0 100.5h2M208.0 100.5h2M209.0 100.5h2M209.0 100.5h2M210.0 100.5h2M211.0 102.5h2M211.0 101.5h2M212.0 172.5h2M212.0 101.5h2M213.0 172.5h2M213.0 102.5h2M214.0 99.5h2M215.0 100.5h2M215.0 173.5h2M216.0 101.5h2M216.0 100.5h2M217.0 102.5h2M218.0 99.5h2M218.0 173.5h2M219.0 99.5h2M219.0 101.5h2M220.0 101.5h2M221.0 100.5h2M221.0 100.5h2M222.0 99.5h2M222.0 100.5h2M223.0 172.5h2M223.0 101.5h2M224.0 101.5h2M225.0 171.5h2M225.0 101.5h2M226.0 102.5h2M226.0 102.5h2M227.0 98.5h2M228.0 102.5h2M228.0 100.5h2M229.0 101.5h2M229.0 172.5h2M230.0 101.5h2M231.0 99.5h2M231.0 103.5h2M232.0 171.5h2M232.0 102.5h2M233.0 101.5h2M233.0 100.5h2M234.0 100.5h2M235.0 104.5h2M235.0 102.5h2M236.0 171.5h2M236.0 102.5h2M237.0 102.5h2M238.0 102.5h2M238.0 99.5h2M239.0 104.5h2M239.0 102.5h2M240.0 102.5h2M241.0 102.5h2M241.0 99.5h2M242.0 98.5h2M242.0 105.5h2M243.0 102.5h2M243.0 109.5h2M244.0 113.5h2M245.0 118.5h2M245.0 114.5h2M246.0 119.5h2M246.0 121.5h2M247.0 119.5h2M248.0 122.5h2M248.0 120.5h2M249.0 121.5h2M249.0 120.5h2M250.0 121.5h2M251.0 118.5h2M251.0 120.5h2M252.0 118.5h2M252.0 118.5h2M253.0 119.5h2M253.0 120.5h2M254.0 120.5h2M255.0 120.5h2M255.0 120.5h2M256.0 118.5h2M256.0 117.5h2M257.0 114.5h2M258.0 116.5h2M258.0 116.5h2M259.0 115.5h2M259.0 115.5h2M260.0 115.5h2M261.0 116.5h2M261.0 114.5h2M262.0 114.5h2M262.0 115.5h2M263.0 114.5h2M263.0 117.5h2M264.0 119.5h2M265.0 118.5h2M265.0 119.5h2M266.0 117.5h2M266.0 118.5h2M267.0 116.5h2M268.0 117.5h2M268.0 120.5h2M269.0 119.5h2M328.0 105.5h2M328.0 108.5h2M329.0 107.5h2M329.0 104.5h2M330.0 104.5h2M330.0 106.5h2M331.0 105.5h2M332.0 103.5h2M332.0 105.5h2M333.0 104.5h2M333.0 103.5h2M334.0 102.5h2M335.0 104.5h2M335.0 105.5h2M336.0 102.5h2M336.0 102.5h2M337.0 102.5h2M338.0 102.5h2M338.0 103.5h2M339.0 102.5h2M339.0 101.5h2M340.0 101.5h2M340.0 100.5h2M341.0 162.5h2M342.0 101.5h2M342.0 167.5h2M343.0 168.5h2M343.0 102.5h2M344.0 101.5h2M345.0 165.5h2M345.0 101.5h2M346.0 162.5h2M346.0 168.5h2M347.0 164.5h2M348.0 162.5h2M348.0 173.5h2M349.0 170.5h2M349.0 168.5h2M350.0 173.5h2M350.0 171.5h2M351.0 165.5h2M352.0 173.5h2M352.0 172.5h2M353.0 172.5h2M353.0 101.5h2M354.0 108.5h2M355.0 102.5h2M355.0 100.5h2M356.0 104.5h2M356.0 164.5h2M357.0 99.5h2M358.0 102.5h2M358.0 104.5h2M359.0 103.5h2M359.0 103.5h2M360.0 106.5h2M360.0 166.5h2M361.0 104.5h2M362.0 103.5h2M362.0 166.5h2M363.0 168.5h2M363.0 100.5h2M364.0 169.5h2M365.0 166.5h2M365.0 104.5h2M366.0 167.5h2M366.0 106.5h2M367.0 165.5h2M368.0 169.5h2M368.0 167.5h2M369.0 99.5h2M369.0 105.5h2M370.0 168.5h2M370.0 105.5h2M371.0 103.5h2M372.0 172.5h2M372.0 101.5h2M373.0 103.5h2M373.0 104.5h2M374.0 104.5h2M375.0 103.5h2M375.0 172.5h2M376.0 98.5h2M376.0 100.5h2M377.0 104.5h2M378.0 100.5h2M378.0 171.5h2M379.0 103.5h2M379.0 103.5h2M380.0 101.5h2M380.0 103.5h2M381.0 104.5h2M382.0 172.5h2M382.0 104.5h2M383.0 103.5h2M383.0 99.5h2M384.0 100.5h2M385.0 99.5h2M385.0 103.5h2M386.0 104.5h2M386.0 103.5h2M387.0 101.5h2M388.0 101.5h2M388.0 100.5h2M389.0 103.5h2M389.0 100.5h2M390.0 172.5h2M390.0 100.5h2M391.0 103.5h2M392.0 102.5h2M392.0 103.5h2M393.0 102.5h2M393.0 103.5h2M394.0 170.5h2M395.0 104.5h2M395.0 103.5h2M396.0 102.5h2M396.0 103.5h2M397.0 102.5h2M398.0 171.5h2M398.0 100.5h2M399.0 172.5h2M399.0 103.5h2M400.0 101.5h2M400.0 170.5h2M401.0 103.5h2M402.0 100.5h2M402.0 100.5h2M403.0 103.5h2M403.0 103.5h2M404.0 104.5h2M405.0 101.5h2M405.0 99.5h2M406.0 99.5h2M406.0 102.5h2M407.0 101.5h2M408.0 101.5h2M408.0 99.5h2M409.0 100.5h2M409.0 102.5h2M410.0 103.5h2M410.0 101.5h2M411.0 99.5h2M412.0 102.5h2M412.0 101.5h2M413.0 101.5h2M413.0 171.5h2M414.0 170.5h2M415.0 170.5h2M415.0 102.5h2M416.0 170.5h2M416.0 169.5h2M417.0 172.5h2M418.0 171.5h2M418.0 101.5h2M419.0 171.5h2M419.0 100.5h2M420.0 101.5h2M420.0 101.5h2M421.0 102.5h2M422.0 166.5h2M422.0 166.5h2M423.0 102.5h2M423.0 169.5h2M424.0 166.5h2M425.0 172.5h2M425.0 169.5h2M426.0 165.5h2M426.0 167.5h2M427.0 165.5h2M428.0 166.5h2M428.0 167.5h2M429.0 167.5h2M429.0 172.5h2M430.0 172.5h2M430.0 165.5h2M431.0 164.5h2M432.0 166.5h2M432.0 166.5h2M433.0 165.5h2M433.0 165.5h2M434.0 169.5h2M435.0 168.5h2M435.0 167.5h2M436.0 169.5h2M436.0 165.5h2M437.0 164.5h2M438.0 167.5h2M438.0 169.5h2M439.0 161.5h2M439.0 168.5h2M440.0 166.5h2M440.0 169.5h2M441.0 169.5h2M442.0 164.5h2M442.0 106.5h2M443.0 104.5h2M443.0 112.5h2M444.0 103.5h2M445.0 103.5h2M445.0 106.5h2M446.0 100.5h2M446.0 107.5h2M447.0 102.5h2M448.0 104.5h2M448.0 100.5h2M449.0 105.5h2M449.0 102.5h2M450.0 106.5h2M450.0 105.5h2M451.0 104.5h2M452.0 104.5h2M452.0 104.5h2M453.0 100.5h2M453.0 105.5h2M454.0 102.5h2M455.0 104.5h2M455.0 102.5h2M456.0 104.5h2M456.0 104.5h2M457.0 105.5h2M457.0 102.5h2M458.0 106.5h2M459.0 167.5h2M459.0 101.5h2M460.0 99.5h2M460.0 107.5h2M461.0 103.5h2M462.0 105.5h2M462.0 101.5h2M463.0 105.5h2M463.0 100.5h2M464.0 103.5h2M465.0 107.5h2M465.0 99.5h2M466.0 106.5h2M466.0 106.5h2M467.0 102.5h2M467.0 104.5h2M468.0 102.5h2M469.0 102.5h2M469.0 106.5h2M470.0 101.5h2M470.0 104.5h2M471.0 100.5h2M472.0 173.5h2M472.0 102.5h2M473.0 104.5h2M473.0 104.5h2M474.0 102.5h2M475.0 100.5h2M475.0 105.5h2M476.0 100.5h2M476.0 170.5h2M477.0 102.5h2M477.0 101.5h2M478.0 171.5h2M479.0 104.5h2M479.0 101.5h2M480.0 171.5h2M480.0 103.5h2M481.0 100.5h2M482.0 171.5h2M482.0 100.5h2M483.0 102.5h2M483.0 103.5h2M484.0 106.5h2M485.0 103.5h2M485.0 171.5h2M486.0 99.5h2M486.0 105.5h2M487.0 104.5h2M487.0 100.5h2M488.0 172.5h2M489.0 100.5h2M489.0 103.5h2M490.0 172.5h2M490.0 171.5h2M491.0 105.5h2M492.0 103.5h2M492.0 171.5h2M493.0 105.5h2M493.0 170.5h2M494.0 105.5h2M495.0 171.5h2M495.0 104.5h2M496.0 104.5h2M496.0 171.5h2M497.0 103.5h2M497.0 170.5h2M498.0 102.5h2M499.0 100.5h2M499.0 104.5h2M500.0 105.5h2M500.0 106.5h2M501.0 99.5h2M502.0 169.5h2M502.0 101.5h2M503.0 171.5h2M503.0 99.5h2M504.0 100.5h2M505.0 171.5h2M505.0 104.5h2M506.0 102.5h2M506.0 108.5h2M507.0 108.5h2M507.0 102.5h2M508.0 100.5h2M509.0 109.5h2M509.0 105.5h2M510.0 101.5h2M510.0 172.5h2M511.0 98.5h2M512.0 170.5h2M512.0 102.5h2M513.0 100.5h2M513.0 105.5h2M514.0 100.5h2M515.0 102.5h2M515.0 105.5h2M516.0 170.5h2M516.0 104.5h2M517.0 107.5h2M517.0 108.5h2M518.0 102.5h2M519.0 105.5h2M519.0 170.5h2M520.0 102.5h2M520.0 163.5h2M521.0 164.5h2M522.0 167.5h2M522.0 160.5h2M523.0 168.5h2M523.0 163.5h2M524.0 165.5h2M525.0 160.5h2M525.0 163.5h2M526.0 160.5h2M526.0 162.5h2M527.0 164.5h2M527.0 160.5h2M528.0 161.5h2M529.0 160.5h2M529.0 162.5h2M530.0 163.5h2M530.0 164.5h2M531.0 161.5h2M532.0 164.5h2M532.0 161.5h2M533.0 165.5h2M533.0 168.5h2M534.0 164.5h2M535.0 164.5h2M535.0 162.5h2M536.0 162.5h2M536.0 164.5h2M537.0 158.5h2M537.0 166.5h2M538.0 161.5h2M539.0 162.5h2M539.0 162.5h2M540.0 164.5h2M540.0 163.5h2M541.0 164.5h2M542.0 162.5h2M542.0 160.5h2M543.0 161.5h2M543.0 160.5h2M544.0 158.5h2M545.0 162.5h2M545.0 161.5h2M546.0 161.5h2M546.0 160.5h2M547.0 162.5h2M547.0 163.5h2M548.0 161.5h2M549.0 160.5h2M549.0 163.5h2M550.0 161.5h2M550.0 159.5h2M551.0 165.5h2M552.0 161.5h2M552.0 162.5h2M553.0 158.5h2M553.0 161.5h2M554.0 163.5h2M555.0 161.5h2M555.0 162.5h2M556.0 159.5h2M556.0 160.5h2M557.0 161.5h2M557.0 160.5h2M558.0 161.5h2M559.0 163.5h2M559.0 159.5h2M560.0 161.5h2M560.0 163.5h2M561.0 164.5h2M562.0 163.5h2M562.0 161.5h2M563.0 156.5h2M563.0 164.5h2M564.0 162.5h2M565.0 161.5h2M565.0 160.5h2M566.0 160.5h2M566.0 163.5h2M567.0 164.5h2M567.0 158.5h2M568.0 162.5h2M569.0 163.5h2M569.0 161.5h2M570.0 167.5h2M570.0 162.5h2M571.0 161.5h2M572.0 161.5h2M572.0 163.5h2M573.0 160.5h2M573.0 162.5h2M574.0 162.5h2M575.0 159.5h2M575.0 159.5h2M576.0 163.5h2M576.0 159.5h2M577.0 158.5h2M577.0 105.5h2M578.0 110.5h2M579.0 110.5h2M579.0 104.5h2M580.0 100.5h2M580.0 105.5h2M581.0 100.5h2M582.0 115.5h2M582.0 104.5h2M583.0 111.5h2M583.0 115.5h2M584.0 111.5h2M585.0 117.5h2M585.0 114.5h2M586.0 116.5h2M586.0 107.5h2M587.0 106.5h2M587.0 113.5h2M588.0 110.5h2M589.0 106.5h2M589.0 109.5h2M590.0 109.5h2M590.0 111.5h2M591.0 107.5h2M592.0 105.5h2M592.0 105.5h2M593.0 104.5h2M593.0 104.5h2M594.0 102.5h2M595.0 101.5h2M595.0 102.5h2M596.0 101.5h2M596.0 103.5h2M597.0 104.5h2M597.0 103.5h2M598.0 100.5h2M599.0 110.5h2M599.0 100.5h2M600.0 103.5h2M600.0 101.5h2M601.0 104.5h2M602.0 105.5h2M602.0 104.5h2M603.0 104.5h2M603.0 102.5h2M604.0 101.5h2M605.0 172.5h2M605.0 106.5h2M606.0 99.5h2M606.0 100.5h2M607.0 99.5h2M607.0 100.5h2M608.0 172.5h2M609.0 104.5h2M609.0 105.5h2M610.0 99.5h2M610.0 171.5h2M611.0 105.5h2M612.0 101.5h2M612.0 104.5h2M613.0 105.5h2M613.0 106.5h2M614.0 101.5h2M615.0 172.5h2M615.0 102.5h2M616.0 98.5h2M616.0 100.5h2M617.0 103.5h2M617.0 172.5h2M618.0 102.5h2M619.0 101.5h2M619.0 104.5h2M620.0 103.5h2M620.0 107.5h2M621.0 106.5h2M622.0 102.5h2M622.0 172.5h2M623.0 104.5h2M623.0 105.5h2M624.0 102.5h2M625.0 101.5h2M625.0 103.5h2M626.0 103.5h2M626.0 100.5h2M627.0 103.5h2M627.0 102.5h2M628.0 103.5h2M629.0 103.5h2M629.0 107.5h2M630.0 106.5h2M630.0 107.5h2M631.0 101.5h2M632.0 112.5h2M632.0 116.5h2M633.0 107.5h2M633.0 117.5h2M634.0 111.5h2M635.0 111.5h2M635.0 113.5h2M636.0 112.5h2M636.0 110.5h2M637.0 111.5h2M637.0 107.5h2M638.0 111.5h2M639.0 112.5h2M639.0 111.5h2M640.0 108.5h2M640.0 110.5h2M641.0 109.5h2M642.0 113.5h2M642.0 110.5h2M643.0 106.5h2M643.0 114.5h2M644.0 107.5h2M645.0 99.5h2M645.0 111.5h2M646.0 114.5h2M646.0 108.5h2M647.0 105.5h2M647.0 111.5h2M648.0 111.5h2M649.0 109.5h2M649.0 108.5h2M650.0 113.5h2M650.0 113.5h2M651.0 110.5h2M652.0 110.5h2M652.0 106.5h2M653.0 105.5h2M653.0 109.5h2M654.0 112.5h2M654.0 117.5h2M655.0 114.5h2M656.0 113.5h2M656.0 106.5h2M657.0 104.5h2M657.0 110.5h2M658.0 111.5h2M659.0 103.5h2M659.0 103.5h2M660.0 113.5h2M660.0 110.5h2M661.0 106.5h2M662.0 108.5h2M662.0 109.5h2M663.0 116.5h2M663.0 103.5h2M664.0 107.5h2M664.0 104.5h2M665.0 110.5h2M666.0 107.5h2M666.0 113.5h2M667.0 111.5h2M667.0 105.5h2M668.0 111.5h2M669.0 103.5h2M669.0 102.5h2M670.0 105.5h2M670.0 102.5h2M671.0 105.5h2M672.0 101.5h2M672.0 103.5h2M673.0 100.5h2M673.0 100.5h2M674.0 102.5h2M674.0 104.5h2M675.0 103.5h2M676.0 103.5h2M676.0 106.5h2M677.0 103.5h2M677.0 104.5h2M678.0 104.5h2M679.0 102.5h2M679.0 103.5h2M680.0 103.5h2M680.0 102.5h2M681.0 101.5h2M682.0 101.5h2M682.0 100.5h2M683.0 100.5h2M683.0 101.5h2M684.0 101.5h2M684.0 105.5h2M685.0 104.5h2M686.0 101.5h2M686.0 100.5h2M687.0 107.5h2M687.0 106.5h2M688.0 100.5h2M689.0 104.5h2M689.0 101.5h2M690.0 102.5h2M690.0 102.5h2M691.0 105.5h2M692.0 170.5h2M692.0 106.5h2M693.0 104.5h2M693.0 103.5h2M694.0 101.5h2M694.0 104.5h2M695.0 104.5h2M696.0 100.5h2M696.0 172.5h2M697.0 105.5h2M697.0 105.5h2M698.0 105.5h2M699.0 109.5h2M699.0 109.5h2M700.0 112.5h2M700.0 110.5h2M701.0 113.5h2M702.0 105.5h2M702.0 111.5h2M703.0 108.5h2M703.0 106.5h2M704.0 112.5h2M704.0 105.5h2M705.0 109.5h2M706.0 107.5h2M706.0 112.5h2M707.0 111.5h2M707.0 110.5h2M708.0 107.5h2M709.0 106.5h2M709.0 112.5h2M710.0 108.5h2M710.0 109.5h2M711.0 113.5h2M712.0 107.5h2M712.0 106.5h2M713.0 105.5h2M713.0 110.5h2M714.0 107.5h2M714.0 112.5h2M715.0 106.5h2M716.0 112.5h2M716.0 109.5h2M717.0 114.5h2M717.0 112.5h2M718.0 113.5h2M719.0 101.5h2M719.0 117.5h2M720.0 106.5h2M720.0 106.5h2M721.0 109.5h2M722.0 110.5h2M722.0 110.5h2M723.0 107.5h2M723.0 100.5h2M724.0 172.5h2M724.0 101.5h2M725.0 104.5h2M726.0 103.5h2M726.0 103.5h2M727.0 167.5h2M727.0 169.5h2M728.0 167.5h2M729.0 100.5h2M729.0 104.5h2M730.0 105.5h2M730.0 169.5h2M731.0 173.5h2M732.0 103.5h2M732.0 168.5h2M733.0 107.5h2M733.0 107.5h2M734.0 103.5h2M734.0 101.5h2M735.0 115.5h2M736.0 109.5h2M736.0 109.5h2M737.0 114.5h2M737.0 112.5h2M738.0 112.5h2M739.0 113.5h2M739.0 112.5h2M740.0 112.5h2M740.0 112.5h2M741.0 105.5h2M742.0 111.5h2M742.0 107.5h2M743.0 111.5h2M743.0 111.5h2M744.0 112.5h2M744.0 114.5h2M745.0 110.5h2M746.0 113.5h2M746.0 109.5h2M747.0 110.5h2M747.0 116.5h2M748.0 111.5h2M749.0 107.5h2M749.0 111.5h2M750.0 109.5h2M750.0 108.5h2M751.0 107.5h2M752.0 109.5h2M752.0 113.5h2M753.0 115.5h2M753.0 114.5h2M754.0 106.5h2M754.0 113.5h2M755.0 113.5h2M756.0 110.5h2M756.0 116.5h2M757.0 113.5h2M757.0 114.5h2M758.0 111.5h2M759.0 106.5h2M759.0 111.5h2M760.0 111.5h2M760.0 111.5h2M761.0 123.5h2M762.0 110.5h2M762.0 112.5h2M763.0 107.5h2M763.0 114.5h2M764.0 114.5h2M764.0 113.5h2M765.0 106.5h2M766.0 112.5h2M766.0 113.5h2M767.0 106.5h2M767.0 108.5h2M768.0 115.5h2M769.0 110.5h2M769.0 115.5h2M770.0 109.5h2M770.0 106.5h2M771.0 111.5h2M772.0 110.5h2M772.0 116.5h2M773.0 109.5h2M773.0 112.5h2M774.0 114.5h2M774.0 114.5h2M775.0 116.5h2M776.0 116.5h2M776.0 115.5h2M777.0 107.5h2M777.0 114.5h2M778.0 113.5h2M779.0 115.5h2M779.0 113.5h2M780.0 107.5h2M780.0 105.5h2M781.0 115.5h2M782.0 106.5h2M782.0 115.5h2M783.0 112.5h2M783.0 107.5h2M784.0 115.5h2M784.0 116.5h2M785.0 110.5h2M786.0 112.5h2M786.0 114.5h2M787.0 107.5h2M787.0 116.5h2M788.0 107.5h2M789.0 111.5h2M789.0 111.5h2M790.0 112.5h2M790.0 109.5h2M791.0 110.5h2M792.0 118.5h2M792.0 116.5h2M793.0 109.5h2M793.0 114.5h2M794.0 109.5h2M794.0 107.5h2M795.0 112.5h2M796.0 111.5h2M796.0 107.5h2M797.0 110.5h2M797.0 107.5h2M798.0 115.5h2M799.0 107.5h2M799.0 112.5h2M800.0 112.5h2M800.0 107.5h2M801.0 110.5h2M802.0 108.5h2M802.0 115.5h2M803.0 123.5h2M803.0 112.5h2M804.0 114.5h2M804.0 106.5h2M805.0 109.5h2M806.0 112.5h2M806.0 114.5h2M807.0 108.5h2M807.0 112.5h2M808.0 113.5h2M809.0 115.5h2M809.0 123.5h2M810.0 107.5h2M810.0 113.5h2M811.0 107.5h2M812.0 109.5h2M812.0 112.5h2M813.0 111.5h2M813.0 111.5h2M814.0 115.5h2M814.0 114.5h2M815.0 116.5h2M816.0 107.5h2M816.0 103.5h2M817.0 113.5h2M817.0 109.5h2M818.0 113.5h2M819.0 98.5h2M819.0 107.5h2M820.0 113.5h2M820.0 109.5h2M821.0 114.5h2M822.0 108.5h2M822.0 111.5h2M823.0 108.5h2M823.0 110.5h2M824.0 113.5h2M824.0 109.5h2M825.0 113.5h2M826.0 109.5h2M826.0 108.5h2M827.0 107.5h2M827.0 111.5h2M828.0 113.5h2M829.0 105.5h2M829.0 107.5h2M830.0 106.5h2M830.0 113.5h2M831.0 114.5h2M832.0 113.5h2M832.0 104.5h2M833.0 117.5h2M833.0 109.5h2M834.0 113.5h2M834.0 114.5h2M835.0 105.5h2M836.0 114.5h2M836.0 111.5h2M837.0 111.5h2M837.0 108.5h2M838.0 113.5h2M839.0 109.5h2M839.0 113.5h2M840.0 104.5h2M840.0 114.5h2M841.0 110.5h2M841.0 108.5h2M842.0 107.5h2M843.0 110.5h2M843.0 104.5h2M844.0 114.5h2M844.0 107.5h2M845.0 112.5h2M846.0 105.5h2M846.0 102.5h2M847.0 106.5h2M847.0 107.5h2M848.0 112.5h2M849.0 108.5h2M849.0 108.5h2M850.0 108.5h2M850.0 109.5h2M851.0 112.5h2M851.0 107.5h2M852.0 109.5h2M853.0 112.5h2M853.0 113.5h2M854.0 110.5h2M854.0 104.5h2M855.0 107.5h2M856.0 106.5h2M856.0 111.5h2M857.0 112.5h2M857.0 110.5h2M858.0 111.5h2M859.0 113.5h2M859.0 108.5h2M860.0 106.5h2M860.0 109.5h2M861.0 112.5h2M861.0 104.5h2M862.0 112.5h2M863.0 108.5h2M863.0 112.5h2M864.0 113.5h2M864.0 113.5h2M865.0 112.5h2M866.0 114.5h2M866.0 111.5h2M867.0 104.5h2M867.0 108.5h2M868.0 110.5h2M869.0 112.5h2M869.0 104.5h2M870.0 103.5h2M870.0 106.5h2M871.0 109.5h2M871.0 112.5h2M872.0 110.5h2M873.0 109.5h2M873.0 106.5h2M874.0 107.5h2M874.0 109.5h2M875.0 110.5h2M876.0 108.5h2M876.0 106.5h2M877.0 108.5h2M877.0 102.5h2M878.0 105.5h2M879.0 112.5h2M879.0 108.5h2M880.0 108.5h2M880.0 110.5h2M881.0 108.5h2M881.0 112.5h2M882.0 115.5h2M883.0 113.5h2M883.0 106.5h2M884.0 112.5h2M884.0 107.5h2M885.0 121.5h2M886.0 107.5h2M886.0 112.5h2M887.0 107.5h2M887.0 115.5h2M888.0 110.5h2M889.0 107.5h2M889.0 107.5h2M890.0 114.5h2M890.0 106.5h2M891.0 112.5h2M891.0 111.5h2M892.0 111.5h2M893.0 113.5h2M893.0 106.5h2M894.0 106.5h2M894.0 114.5h2M895.0 107.5h2M896.0 108.5h2M896.0 111.5h2M897.0 110.5h2M897.0 112.5h2M898.0 112.5h2M899.0 109.5h2M899.0 108.5h2M900.0 110.5h2M900.0 109.5h2M901.0 109.5h2M901.0 113.5h2M902.0 112.5h2M903.0 115.5h2M903.0 106.5h2M904.0 111.5h2M904.0 114.5h2M905.0 105.5h2M906.0 115.5h2M906.0 113.5h2M907.0 106.5h2M907.0 116.5h2M908.0 113.5h2M909.0 104.5h2M909.0 106.5h2M910.0 108.5h2M910.0 112.5h2M911.0 110.5h2M911.0 106.5h2M912.0 109.5h2M913.0 106.5h2M913.0 113.5h2M914.0 109.5h2M914.0 106.5h2M915.0 109.5h2M916.0 106.5h2M916.0 111.5h2M917.0 109.5h2M917.0 114.5h2M918.0 114.5h2M919.0 105.5h2M919.0 102.5h2M920.0 113.5h2M920.0 107.5h2M921.0 108.5h2M921.0 114.5h2M922.0 110.5h2M923.0 107.5h2M923.0 105.5h2M924.0 101.5h2M924.0 112.5h2M925.0 111.5h2M926.0 104.5h2M926.0 108.5h2M927.0 112.5h2M927.0 114.5h2M928.0 114.5h2M929.0 112.5h2M929.0 111.5h2M930.0 112.5h2M930.0 101.5h2M931.0 101.5h2M931.0 100.5h2M932.0 100.5h2M933.0 100.5h2M933.0 101.5h2M934.0 99.5h2M867.0 134.5h2M365.0 116.5h2M451.0 116.5h2M468.0 112.5h2M617.0 121.5h2M606.0 112.5h2M847.0 172.5h2M931.0 173.5h2M463.0 172.5h2M465.0 164.5h2" stroke="#000" stroke-width="1.1" fill="none"/>
<path d="M89.0 187.8 L90.6 187.8 L92.1 187.6 L93.4 186.8 L94.7 186.3 L96.0 185.8 L97.3 185.4 L98.9 186.0 L100.4 186.2 L101.7 185.7 L102.9 185.7 L104.1 185.3 L105.4 185.2 L106.6 184.5 L108.0 185.0 L109.4 185.6 L110.8 185.8 L112.0 185.9 L113.3 185.8 L114.5 185.2 L115.7 184.8 L117.0 184.8 L118.2 185.0 L119.5 184.9 L120.7 184.7 L122.0 184.7 L123.2 184.5 L124.4 184.4 L125.7 184.5 L126.9 184.6 L128.2 184.5 L129.4 184.4 L130.8 184.6 L132.2 184.8 L133.5 185.0 L134.9 185.0 L136.3 185.5 L137.7 185.7 L138.9 185.9 L140.2 185.9 L141.4 186.3 L142.7 186.5 L143.9 186.3 L145.1 186.1 L146.3 186.1 L147.5 186.0 L148.7 186.0 L149.9 185.6 L151.1 185.6 L152.4 185.9 L153.7 186.1 L155.0 186.5 L156.3 187.0 L157.7 187.1 L159.1 187.0 L160.5 186.9 L161.8 186.6 L163.2 186.5 L164.6 186.8 L165.9 186.9 L167.2 186.9 L168.5 187.1 L169.8 187.5 L171.1 187.7 L172.4 187.7 L173.7 187.8 L175.0 188.0 L176.2 188.2 L177.5 188.3 L178.8 188.2 L180.0 188.3 L181.3 188.1 L182.6 188.1 L183.9 188.5 L185.1 188.9 L186.4 188.9 L187.7 188.8 L189.0 188.7 L190.2 188.9 L191.5 189.3 L192.8 189.5 L194.0 189.6 L195.2 189.9 L196.5 189.8 L197.7 190.0 L199.0 190.4 L200.2 190.5 L201.5 190.6 L202.7 190.6 L203.9 190.9 L205.2 191.3 L206.4 191.1 L207.7 191.5 L208.9 191.8 L210.1 192.1 L211.4 192.2 L212.6 192.4 L213.9 192.4 L215.1 192.5 L216.4 192.6 L217.6 192.5 L218.8 193.0 L220.1 193.1 L221.3 193.1 L222.6 193.3 L223.8 193.5 L225.1 193.6 L226.3 193.7 L227.5 194.0 L228.8 194.3 L230.1 194.4 L231.4 194.5 L232.7 194.4 L234.1 194.5 L235.4 194.5 L236.7 194.9 L238.0 195.3 L239.3 195.5 L240.6 195.7 L242.0 195.9 L243.3 195.7 L244.5 196.5 L245.8 197.1 L247.0 197.4 L248.2 197.8 L249.5 198.3 L250.7 199.3 L251.9 199.7 L253.1 200.2 L254.3 201.0 L255.5 201.6 L256.7 202.0 L257.9 202.0 L259.1 202.2 L260.4 202.1 L261.6 202.1 L262.8 202.4 L264.0 202.5 L265.3 202.5 L266.6 202.7 L267.9 202.6 L269.2 202.8 L270.4 203.0 L271.7 203.0 L273.0 203.0 L274.3 203.6 L275.6 203.6 L276.8 203.5 L278.1 203.8 L279.3 204.0 L280.5 203.8 L281.8 203.7 L283.0 203.7 L284.3 204.1 L285.5 204.0 L286.8 204.3 L288.1 204.6 L289.4 204.6 L290.7 204.6 L292.1 205.0 L293.4 205.2 L294.7 205.1 L296.0 205.0 L297.4 205.2 L298.7 205.3 L300.0 205.4 L300.0 204.9 L301.2 205.1 L302.5 205.0 L303.7 205.1 L305.0 205.5 L306.2 205.8 L307.5 205.7 L308.7 205.9 L309.9 205.8 L311.2 206.2 L312.4 206.3 L313.7 206.2 L314.9 206.1 L316.1 206.0 L317.4 206.5 L318.6 206.3 L319.9 206.7 L321.1 207.0 L322.4 207.0 L323.6 206.9 L324.8 207.2 L326.1 207.5 L327.3 207.5 L328.6 207.4 L329.8 207.3 L331.1 207.3 L332.3 207.2 L333.5 207.5 L334.8 207.5 L336.0 207.4 L337.3 207.3 L338.5 207.5 L339.8 207.4 L341.1 207.4 L342.4 207.3 L343.6 207.6 L344.9 207.7 L346.2 207.2 L347.5 207.1 L348.7 207.0 L350.0 207.3 L351.3 207.4 L352.6 207.1 L353.8 206.9 L355.1 207.1 L356.4 207.4 L357.7 207.6 L358.9 207.4 L360.2 207.6 L361.5 207.6 L362.7 207.5 L364.0 207.8 L365.3 207.5 L366.6 207.7 L367.8 207.4 L369.1 207.4 L370.4 207.8 L371.9 207.3 L373.5 207.1 L374.8 207.7 L376.1 208.3 L377.4 208.7 L378.7 209.1 L379.9 209.0 L381.2 209.3 L382.5 209.3 L383.8 209.6 L385.0 209.7 L386.3 209.3 L387.6 209.4 L388.9 209.2 L390.1 209.0 L391.4 209.0 L392.7 209.4 L394.0 209.6 L395.2 209.8 L396.6 209.9 L398.0 210.2 L399.4 210.6 L400.6 210.4 L401.9 210.5 L403.2 210.3 L404.5 210.1 L405.7 210.2 L407.0 210.5 L408.3 210.5 L409.6 210.8 L410.8 210.6 L412.1 210.5 L413.4 210.7 L414.7 210.8 L415.9 210.4 L417.2 210.6 L418.5 210.5 L419.8 210.4 L421.0 210.8 L422.3 210.6 L423.6 210.6 L424.9 211.0 L426.1 211.0 L427.4 210.8 L428.7 210.8 L430.0 210.8 L431.2 211.1 L432.5 211.0 L433.8 211.4 L435.0 211.3 L436.3 211.6 L437.6 211.8 L438.9 211.6 L440.1 211.5 L441.4 211.6 L442.7 211.4 L444.0 211.7 L445.2 211.5 L446.5 211.5 L447.8 212.0 L449.1 211.9 L450.3 211.9 L451.5 211.7 L452.8 211.5 L454.0 211.2 L455.3 211.5 L456.5 211.6 L457.8 211.6 L459.0 211.0 L460.2 210.8 L461.5 210.8 L462.8 211.0 L464.1 210.8 L465.4 210.8 L466.7 210.8 L468.0 210.5 L469.2 210.5 L470.5 210.3 L471.8 210.2 L473.2 210.3 L474.6 210.6 L476.0 211.3 L477.3 211.3 L478.6 211.4 L479.9 211.5 L481.2 211.7 L482.4 211.6 L483.7 211.5 L485.0 211.4 L486.3 211.4 L487.6 211.8 L488.8 212.1 L490.1 211.9 L491.3 211.9 L492.5 212.0 L493.8 212.1 L495.0 212.3 L496.3 212.2 L497.5 212.0 L498.8 212.1 L500.1 212.2 L501.5 212.5 L502.9 212.5 L504.3 212.6 L505.7 213.0 L507.0 213.1 L508.3 213.2 L509.5 213.0 L510.8 213.0 L512.0 212.6 L512.0 212.6 L513.3 212.8 L514.6 212.4 L515.9 212.7 L517.2 212.4 L518.5 212.6 L519.8 212.8 L521.1 212.8 L522.4 212.5 L523.6 212.6 L524.8 212.9 L526.1 213.5 L527.3 213.6 L528.6 214.1 L529.9 213.9 L531.2 214.3 L532.4 214.0 L533.7 214.1 L535.0 214.5 L536.3 214.7 L537.6 215.0 L538.9 215.1 L540.2 215.0 L541.5 214.9 L542.8 214.5 L544.1 214.5 L545.4 214.2 L546.7 214.4 L548.0 214.4 L549.3 214.2 L550.6 214.2 L551.9 214.8 L553.2 215.1 L554.5 215.2 L555.9 215.3 L557.2 215.7 L558.5 215.7 L559.8 215.8 L561.1 215.9 L562.4 216.0 L563.8 216.0 L565.1 216.2 L566.5 216.2 L567.9 216.2 L569.3 216.0 L570.7 216.0 L572.0 215.8 L573.3 215.1 L574.5 214.5 L575.8 214.2 L577.0 213.5 L578.2 212.8 L579.6 212.9 L581.0 212.7 L582.4 212.5 L583.8 212.7 L585.2 212.8 L586.5 212.9 L587.8 212.6 L589.0 212.5 L590.3 212.4 L591.5 212.0 L592.7 211.8 L594.0 211.6 L595.2 211.2 L596.5 211.1 L597.7 210.9 L599.0 211.0 L600.3 210.9 L601.6 210.4 L602.9 210.2 L604.3 209.6 L605.6 209.3 L606.9 209.2 L608.3 209.2 L609.6 209.3 L610.9 209.8 L612.2 210.3 L613.4 210.4 L614.8 210.0 L616.2 209.7 L617.6 209.0 L619.0 208.6 L620.3 208.2 L621.7 207.6 L623.1 208.0 L624.5 208.3 L625.9 208.6 L627.2 207.9 L628.5 207.1 L629.7 206.5 L631.0 206.0 L632.3 206.6 L633.6 207.3 L634.9 207.4 L636.2 208.1 L637.5 208.1 L638.7 207.8 L639.9 207.7 L641.2 207.4 L642.4 207.5 L643.7 206.7 L645.0 206.6 L646.3 206.2 L647.6 205.6 L648.9 204.9 L650.2 204.6 L651.5 204.2 L652.8 203.3 L654.0 203.3 L655.2 203.3 L656.4 203.2 L657.6 203.0 L658.8 202.7 L660.0 202.8 L661.2 203.3 L662.4 203.4 L663.7 203.8 L664.9 204.0 L666.1 204.1 L667.3 204.4 L668.7 204.1 L670.0 204.2 L671.4 204.2 L672.7 203.2 L673.9 202.6 L675.1 201.8 L676.4 200.9 L677.6 200.2 L678.9 201.2 L680.1 202.5 L681.4 201.5 L682.7 200.8 L683.9 200.2 L685.2 199.4 L686.5 199.0 L687.7 198.4 L689.0 197.9 L690.6 198.5 L692.1 199.2 L693.4 199.1 L694.7 198.7 L696.0 198.6 L697.3 198.2 L698.7 199.0 L700.1 199.8 L701.4 200.5 L702.7 200.3 L703.9 199.9 L705.2 199.5 L706.4 199.3 L707.6 199.1 L709.0 199.1 L710.4 199.1 L711.8 199.1 L713.2 198.2 L714.5 197.8 L715.9 196.9 L717.3 197.5 L718.7 197.8 L720.1 198.4 L721.4 198.0 L722.7 197.6 L724.0 196.7 L724.0 196.7 L725.4 195.9 L726.8 195.0 L728.1 194.2 L729.5 194.0 L730.9 194.0 L732.3 193.6 L733.7 193.6 L735.0 193.6 L736.4 193.4 L737.8 193.5 L739.2 193.9 L740.6 194.1 L741.9 194.1 L743.3 194.2 L744.7 194.2 L746.1 193.9 L747.5 193.5 L748.8 193.4 L750.2 193.4 L751.6 193.5 L753.0 193.4 L754.4 193.5 L755.7 193.9 L757.1 193.9 L758.5 194.2 L759.9 194.2 L761.3 194.4 L762.5 194.6 L763.8 194.3 L765.0 194.1 L766.2 194.2 L767.5 194.2 L768.7 194.1 L770.0 193.9 L771.2 194.0 L772.4 194.0 L773.7 194.1 L775.1 194.0 L776.4 193.6 L777.8 193.3 L779.2 193.0 L780.6 192.6 L782.0 192.1 L783.3 191.9 L784.7 191.5 L786.1 191.2 L787.5 190.9 L788.9 190.4 L790.2 190.2 L791.5 190.0 L792.7 190.0 L794.0 189.8 L795.2 189.6 L796.5 189.4 L797.7 189.2 L798.9 188.9 L800.2 188.5 L801.4 188.1 L802.7 188.1 L803.9 188.3 L805.2 188.2 L806.4 188.0 L807.6 188.3 L808.9 188.3 L810.1 188.3 L811.4 188.1 L812.6 188.2 L813.9 188.4 L815.1 188.4 L816.4 188.2 L817.7 188.1 L819.0 187.6 L820.3 187.6 L821.6 187.7 L822.9 187.5 L824.2 187.2 L825.4 187.1 L826.8 187.9 L828.2 188.5 L829.6 189.2 L830.8 189.4 L832.0 189.0 L833.2 188.7 L834.4 188.8 L835.6 188.6 L836.8 188.4 L838.0 188.0 L839.2 187.7 L840.5 187.1 L841.7 186.8 L842.9 186.5 L844.1 186.2 L845.5 186.0 L846.8 186.1 L848.2 186.0 L849.6 186.2 L851.0 186.1 L852.4 186.4 L853.7 186.5 L855.1 186.2 L856.5 186.0 L857.9 186.3 L859.3 186.2 L860.6 186.2 L862.0 185.5 L863.4 185.4 L864.8 185.1 L866.2 184.5 L867.5 184.2 L868.9 184.0 L870.2 184.1 L871.4 183.8 L872.6 183.9 L873.9 183.7 L875.1 184.0 L876.4 183.6 L877.6 183.5 L878.9 183.1 L880.1 182.8 L881.3 182.2 L882.6 182.6 L883.8 182.8 L885.1 183.1 L886.3 183.8 L887.6 184.2 L888.8 183.9 L890.0 183.2 L891.3 182.9 L892.5 182.5 L893.8 181.8 L895.1 182.0 L896.5 182.4 L897.9 182.9 L899.3 183.2 L900.7 183.5 L902.0 183.9 L903.3 183.6 L904.6 183.4 L905.9 182.6 L907.2 181.9 L908.6 183.0 L910.0 184.0 L911.4 185.0 L912.6 184.7 L913.8 184.3 L915.1 184.3 L916.3 183.8 L917.6 183.7 L918.9 183.6 L920.2 183.8 L921.5 184.0 L922.8 184.2 L924.0 183.7 L925.2 183.3 L926.5 183.3 L927.7 182.9 L929.0 182.7 L930.3 182.7 L931.5 183.2 L932.8 183.3 L934.1 183.7" fill="none" stroke="#1a1a1a" stroke-width="0.95" stroke-linejoin="round"/>
<path d="M89.0 256.0 L90.4 255.6 L91.8 254.6 L93.2 253.8 L94.5 253.8 L95.8 253.7 L97.1 253.5 L98.4 253.0 L99.7 253.3 L101.1 253.5 L102.5 253.7 L103.9 253.1 L105.3 252.8 L106.6 252.5 L108.0 253.0 L109.4 253.6 L110.8 254.1 L112.2 253.6 L113.5 253.1 L114.9 252.5 L116.3 252.2 L117.7 252.0 L119.1 252.1 L120.4 252.0 L121.8 252.0 L123.2 252.3 L124.5 251.8 L125.8 251.2 L127.1 250.5 L128.4 249.7 L129.8 250.3 L131.1 250.7 L132.5 251.3 L133.7 251.9 L134.9 252.1 L136.1 252.0 L137.3 252.5 L138.6 252.7 L139.8 252.9 L141.1 253.0 L142.5 253.0 L143.9 253.0 L145.3 252.7 L146.7 253.0 L148.0 253.1 L149.3 252.7 L150.5 252.8 L151.8 252.8 L153.0 252.7 L154.2 252.7 L155.5 252.4 L156.8 252.4 L158.1 252.0 L159.4 251.9 L160.6 251.9 L161.8 252.3 L163.0 252.7 L164.3 252.7 L165.5 252.9 L166.7 253.4 L167.9 253.4 L169.2 253.2 L170.4 252.9 L171.6 252.9 L172.9 253.1 L174.1 252.7 L175.4 252.8 L176.6 252.5 L177.9 252.6 L179.1 252.2 L180.5 252.5 L181.9 252.5 L183.2 252.4 L184.6 252.3 L186.0 252.3 L187.4 252.3 L188.7 251.6 L190.0 250.9 L191.3 250.5 L192.6 250.3 L193.8 250.5 L195.1 250.4 L196.4 250.9 L197.7 251.2 L199.0 251.4 L200.4 251.1 L201.7 251.3 L203.0 251.0 L204.3 251.2 L205.6 251.1 L206.9 251.1 L208.3 251.5 L209.6 251.3 L210.9 251.4 L212.2 251.7 L213.6 251.4 L215.0 251.1 L216.4 251.4 L217.7 251.2 L219.1 251.2 L220.5 250.7 L221.9 250.3 L223.3 249.8 L224.6 249.6 L226.0 249.0 L227.4 249.0 L228.8 248.2 L230.2 248.1 L231.5 247.5 L232.9 247.1 L234.3 247.1 L235.7 246.5 L237.1 246.1 L238.3 245.9 L239.5 245.5 L240.7 244.8 L241.9 244.9 L243.1 244.2 L244.3 243.5 L245.7 241.7 L247.1 239.9 L248.4 238.2 L249.8 236.7 L251.2 235.6 L252.6 234.2 L253.9 234.2 L255.2 234.3 L256.5 234.3 L257.8 234.3 L259.0 234.5 L260.2 234.8 L261.5 235.0 L262.7 235.0 L264.0 234.9 L265.2 234.9 L266.5 234.6 L267.7 234.2 L268.9 234.1 L270.2 234.3 L271.5 234.0 L272.8 234.1 L274.1 234.1 L275.4 234.1 L276.7 233.9 L278.0 234.3 L279.3 234.1 L280.6 234.2 L281.9 234.1 L283.1 233.8 L284.4 234.0 L285.7 233.9 L287.0 233.7 L288.3 233.6 L289.6 233.7 L290.9 233.6 L292.2 234.0 L293.5 234.1 L294.8 234.4 L296.1 234.6 L297.4 234.7 L298.7 234.3 L300.0 234.2 L300.0 234.2 L301.3 234.4 L302.6 234.5 L303.9 234.6 L305.2 234.6 L306.5 234.4 L307.8 234.3 L309.2 234.4 L310.5 234.1 L311.8 233.9 L313.1 234.1 L314.4 234.0 L315.7 234.3 L317.0 234.2 L318.3 234.0 L319.6 234.0 L320.9 234.0 L322.2 234.0 L323.5 234.2 L324.8 234.2 L326.1 234.2 L327.4 234.4 L328.7 234.2 L330.0 234.6 L331.3 234.8 L332.6 234.8 L333.9 234.6 L335.2 234.6 L336.5 234.6 L337.8 234.3 L339.1 234.3 L340.4 234.5 L341.7 234.3 L343.0 234.2 L344.3 234.6 L345.5 234.5 L346.9 234.1 L348.3 234.0 L349.7 233.6 L351.1 233.7 L352.4 234.5 L353.8 234.7 L355.1 234.3 L356.3 234.6 L357.6 234.3 L358.8 234.3 L360.0 234.7 L361.3 234.7 L362.5 234.4 L363.8 234.4 L365.0 234.4 L366.2 234.5 L367.5 234.3 L368.8 234.4 L370.1 234.0 L371.3 234.0 L372.6 233.9 L373.9 234.3 L375.2 233.8 L376.4 234.0 L377.7 233.7 L379.0 233.7 L380.3 233.6 L381.5 233.6 L382.8 233.7 L384.1 233.6 L385.4 233.3 L386.7 233.2 L388.0 233.1 L389.3 233.5 L390.6 233.6 L391.9 233.9 L393.2 233.9 L394.5 233.4 L395.8 233.6 L397.0 233.7 L398.3 233.8 L399.6 233.7 L400.9 233.5 L402.2 233.5 L403.5 233.7 L404.9 233.8 L406.3 234.2 L407.7 234.6 L408.9 234.9 L410.2 234.9 L411.5 235.1 L412.8 235.1 L414.0 234.7 L415.3 234.5 L416.6 234.5 L417.8 234.4 L419.1 234.4 L420.4 234.6 L421.7 234.9 L422.9 234.8 L424.2 234.9 L425.5 234.4 L426.8 234.3 L428.0 234.6 L429.3 234.2 L430.6 234.1 L431.9 233.8 L433.1 233.6 L434.4 234.0 L435.7 234.2 L437.0 234.1 L438.2 233.6 L439.5 233.5 L440.8 233.3 L442.1 233.5 L443.4 233.6 L444.7 233.5 L446.0 233.4 L447.3 233.1 L448.5 233.2 L449.8 233.5 L451.1 233.5 L452.4 233.1 L453.7 233.1 L455.0 233.2 L456.3 233.0 L457.6 233.3 L458.9 233.1 L460.2 233.1 L461.5 233.0 L462.8 233.2 L464.0 233.1 L465.3 232.8 L466.6 232.4 L467.9 232.3 L469.1 231.9 L470.4 232.0 L471.7 232.2 L473.0 231.8 L474.2 231.8 L475.5 231.7 L476.8 231.5 L478.0 231.6 L479.3 231.8 L480.6 231.8 L481.9 231.6 L483.2 231.8 L484.5 231.5 L485.8 231.6 L487.1 231.6 L488.4 231.7 L489.7 231.8 L491.0 231.4 L492.3 231.4 L493.6 231.3 L494.9 231.4 L496.2 231.7 L497.5 231.6 L498.8 231.1 L500.1 231.1 L501.4 231.2 L502.7 231.3 L504.1 231.2 L505.4 231.2 L506.7 230.7 L508.0 230.9 L509.4 230.9 L510.7 230.7 L512.0 230.8 L512.0 231.7 L513.3 231.2 L514.5 231.4 L515.8 231.4 L517.1 231.0 L518.4 231.2 L519.6 231.1 L520.9 230.8 L522.2 231.0 L523.5 230.7 L524.7 230.8 L526.0 230.7 L527.3 230.5 L528.6 230.6 L529.8 230.6 L531.1 230.4 L532.4 230.7 L533.7 230.4 L534.9 230.1 L536.2 230.2 L537.5 230.5 L538.8 230.5 L540.0 230.6 L541.3 230.5 L542.6 230.5 L543.9 230.3 L545.1 230.1 L546.4 230.1 L547.6 229.7 L548.9 229.5 L550.1 229.8 L551.3 229.6 L552.6 229.8 L553.8 229.9 L555.1 229.6 L556.3 229.6 L557.5 229.7 L558.8 229.9 L560.0 229.6 L561.3 229.4 L562.5 229.5 L563.8 229.7 L565.1 230.0 L566.5 230.2 L567.9 230.9 L569.3 231.7 L570.7 231.9 L572.0 232.3 L573.4 232.3 L574.8 232.2 L576.2 232.5 L577.6 232.3 L578.9 232.4 L580.3 232.4 L581.6 232.3 L582.9 232.4 L584.2 231.9 L585.5 232.0 L586.8 231.8 L588.1 231.8 L589.4 231.8 L590.7 231.7 L591.9 231.5 L593.2 231.6 L594.4 231.2 L595.6 231.3 L596.9 231.2 L598.1 231.2 L599.4 231.4 L600.6 231.5 L601.9 231.4 L603.1 231.1 L604.3 230.7 L605.6 230.6 L606.8 230.3 L608.1 230.1 L609.3 230.4 L610.3 230.6 L611.4 231.4 L612.7 231.1 L614.0 230.8 L615.3 230.5 L616.6 230.1 L617.8 231.1 L619.1 231.9 L620.4 232.9 L621.7 233.7 L623.0 234.4 L624.2 235.0 L625.5 235.1 L626.7 235.5 L627.9 236.0 L629.2 235.1 L630.4 234.1 L631.7 233.4 L632.9 232.6 L634.1 232.2 L635.5 231.8 L636.9 231.5 L638.3 231.4 L639.7 230.8 L641.0 230.7 L642.4 230.4 L643.7 230.2 L644.9 230.3 L646.2 230.0 L647.4 230.2 L648.6 230.2 L650.0 229.8 L651.4 229.5 L652.8 229.4 L654.2 229.1 L655.5 228.8 L656.9 228.6 L658.2 228.6 L659.5 228.4 L660.8 228.4 L662.1 227.9 L663.4 227.8 L664.7 227.8 L666.0 227.5 L667.3 227.3 L668.5 227.3 L669.8 227.9 L671.0 228.0 L672.2 228.2 L673.5 228.6 L674.9 228.9 L676.2 229.9 L677.6 230.1 L679.3 237.1 L680.4 236.9 L681.6 236.7 L682.7 236.8 L683.8 236.8 L685.1 237.0 L686.3 237.1 L687.6 237.3 L688.8 237.3 L690.0 237.8 L691.3 237.3 L692.5 236.7 L693.8 236.5 L695.0 235.8 L696.3 235.4 L697.8 232.7 L699.4 229.2 L700.7 228.8 L702.0 228.5 L703.2 228.3 L704.5 228.1 L705.6 229.5 L706.6 231.0 L708.2 230.0 L709.7 229.1 L711.0 229.2 L712.3 229.1 L713.6 229.1 L714.9 229.3 L716.4 228.0 L718.0 227.0 L719.2 227.3 L720.4 227.1 L721.6 227.3 L722.8 226.9 L724.0 226.9 L724.0 227.5 L725.6 227.8 L727.1 228.3 L728.6 233.7 L730.0 233.8 L731.5 234.3 L732.9 234.3 L734.4 234.4 L735.9 232.2 L737.5 229.8 L738.8 230.1 L740.0 230.2 L741.3 230.3 L742.6 230.3 L744.0 231.2 L745.4 231.9 L746.8 232.4 L748.0 231.8 L749.3 231.3 L750.5 231.0 L751.7 230.3 L753.0 229.8 L754.2 229.8 L755.5 229.1 L756.7 228.9 L758.0 228.5 L759.2 228.1 L760.4 227.6 L761.7 227.4 L762.9 227.6 L764.2 227.2 L765.4 227.0 L766.8 227.3 L768.2 227.4 L769.5 227.6 L770.9 228.2 L772.3 228.2 L773.7 228.9 L775.0 229.3 L776.3 229.4 L777.6 230.1 L778.9 230.3 L780.2 230.7 L781.5 231.1 L782.7 231.3 L784.0 231.8 L785.4 231.3 L786.8 231.0 L788.2 231.1 L789.6 231.0 L790.9 230.7 L792.3 230.4 L793.9 231.2 L795.4 231.4 L796.8 230.6 L798.2 229.4 L799.6 228.4 L800.9 229.0 L802.3 229.7 L803.7 230.3 L805.0 230.3 L806.2 230.3 L807.5 230.4 L808.8 230.6 L810.0 230.6 L811.3 230.5 L812.6 230.2 L813.8 230.3 L815.1 229.8 L816.5 230.1 L817.9 231.0 L819.2 231.6 L820.6 231.2 L822.0 230.9 L823.4 230.7 L824.8 230.5 L826.1 230.3 L827.5 230.1 L828.9 230.4 L830.3 230.5 L831.7 230.4 L833.0 230.3 L834.4 230.2 L835.8 230.4 L837.0 230.5 L838.3 230.1 L839.5 230.1 L840.8 230.1 L842.0 230.0 L843.2 230.0 L844.5 230.4 L845.7 230.6 L847.0 230.8 L848.2 231.4 L849.5 231.9 L850.7 232.3 L851.9 232.8 L853.2 233.2 L854.4 233.5 L855.8 232.6 L857.2 232.4 L858.6 232.1 L859.6 234.7 L860.6 233.2 L861.7 231.3 L863.0 231.4 L864.3 231.5 L865.6 232.0 L866.9 232.3 L868.4 231.7 L870.0 231.7 L871.3 232.5 L872.5 233.2 L873.8 233.6 L875.1 234.0 L876.5 233.6 L877.9 233.8 L879.3 233.7 L880.8 234.5 L882.4 235.9 L883.7 236.0 L885.0 236.1 L886.3 236.2 L887.6 236.6 L888.8 236.3 L890.0 236.2 L891.3 235.8 L892.5 235.8 L893.8 235.5 L895.0 236.1 L896.2 236.0 L897.4 236.2 L898.6 236.5 L899.8 236.7 L901.0 237.0 L902.3 237.0 L903.6 236.3 L904.9 236.1 L906.2 235.8 L907.4 235.5 L908.7 234.9 L909.9 234.4 L911.2 233.9 L912.4 233.5 L913.8 233.1 L915.2 232.7 L916.5 232.5 L917.9 232.2 L919.3 232.0 L920.7 231.8 L921.9 234.0 L923.2 236.0 L924.4 238.4 L925.6 238.4 L926.8 237.8 L927.9 237.5 L929.5 237.7 L931.0 238.0 L932.6 237.2 L934.1 236.0" fill="none" stroke="#ff0000" stroke-width="0.95" stroke-linejoin="round"/>
<path d="M89.0 338.5 L90.1 337.9 L91.1 337.1 L92.3 337.3 L93.5 337.3 L94.7 337.0 L95.9 336.8 L97.1 337.2 L98.4 337.1 L99.7 337.1 L101.1 337.7 L102.5 337.7 L103.9 338.1 L105.3 338.1 L106.6 338.2 L108.0 337.8 L109.4 337.8 L110.8 337.8 L112.2 337.5 L113.5 337.4 L114.9 337.3 L116.3 336.9 L117.7 337.2 L119.1 337.3 L120.4 337.1 L121.8 336.9 L123.2 337.3 L124.5 336.9 L125.8 336.7 L127.1 336.5 L128.4 336.1 L129.6 336.5 L130.8 336.5 L132.0 336.8 L133.2 336.9 L134.4 337.3 L135.6 337.7 L137.0 337.1 L138.4 336.8 L139.8 336.7 L141.1 337.0 L142.5 336.8 L143.9 336.7 L145.1 336.7 L146.4 336.9 L147.6 337.0 L148.9 337.2 L150.1 337.4 L151.5 337.2 L152.9 337.1 L154.2 336.8 L155.6 336.6 L157.0 336.3 L158.4 336.1 L159.8 336.1 L161.2 335.9 L162.5 336.2 L163.9 336.6 L165.3 336.8 L166.7 336.7 L168.1 336.7 L169.4 336.3 L170.8 336.4 L172.2 336.3 L173.6 336.0 L175.0 335.7 L176.3 335.9 L177.7 336.0 L179.1 335.4 L180.5 335.5 L181.9 335.2 L183.2 334.8 L184.5 334.7 L185.7 335.0 L187.0 335.2 L188.2 334.8 L189.4 335.0 L190.8 334.2 L192.2 334.0 L193.6 333.4 L195.0 333.6 L196.3 333.8 L197.7 333.5 L199.1 333.7 L200.5 333.3 L201.9 332.9 L203.1 332.9 L204.4 332.5 L205.6 332.3 L206.8 332.2 L208.1 332.2 L209.3 332.0 L210.6 331.8 L211.8 332.2 L213.0 332.0 L214.3 332.3 L215.5 332.2 L216.8 331.8 L218.0 331.5 L219.3 331.3 L220.5 331.2 L221.7 330.6 L223.0 330.1 L224.2 329.6 L225.5 329.2 L226.7 328.5 L228.0 328.0 L229.3 327.7 L230.6 327.1 L231.9 326.6 L233.2 326.6 L234.5 326.1 L235.8 325.7 L237.1 325.0 L238.3 324.4 L239.5 324.0 L240.8 323.1 L242.0 322.7 L243.3 322.2 L244.3 320.9 L245.3 320.0 L246.9 316.2 L248.4 312.5 L249.8 309.4 L251.2 306.6 L252.6 303.7 L254.1 302.1 L255.7 300.7 L256.9 300.1 L258.2 299.6 L259.4 299.9 L260.7 300.4 L261.9 301.1 L263.1 300.9 L264.4 300.9 L265.7 300.1 L267.1 299.3 L268.4 298.7 L269.8 297.8 L271.0 297.6 L272.3 297.7 L273.5 297.2 L274.7 297.2 L276.0 297.3 L277.2 297.0 L278.5 296.7 L279.7 296.9 L281.0 296.6 L282.3 296.3 L283.5 296.3 L284.8 296.4 L286.1 296.1 L287.3 296.0 L288.6 295.9 L289.9 296.1 L291.1 295.9 L292.4 296.0 L293.7 295.6 L294.9 295.5 L296.2 295.5 L297.5 295.7 L298.7 295.4 L300.0 295.1 L300.0 295.4 L301.2 295.4 L302.5 295.1 L303.7 295.2 L305.0 295.3 L306.2 294.9 L307.5 294.6 L308.7 294.7 L309.9 294.6 L311.2 294.6 L312.4 294.2 L313.7 293.9 L315.1 293.7 L316.4 293.8 L317.7 293.6 L319.0 293.4 L320.3 293.3 L321.6 293.2 L323.0 293.0 L324.3 293.2 L325.6 292.8 L326.9 292.4 L328.2 292.6 L329.5 292.7 L330.8 292.6 L332.1 292.2 L333.4 292.2 L334.7 292.1 L336.0 291.6 L337.3 291.5 L338.6 291.6 L340.0 291.5 L341.4 291.4 L342.8 291.1 L344.2 291.0 L345.5 290.9 L346.8 291.2 L348.0 292.0 L349.4 291.3 L350.7 291.0 L352.0 291.0 L353.3 291.6 L354.6 292.0 L355.9 292.5 L357.3 292.6 L358.7 292.6 L360.0 292.4 L361.4 292.0 L362.8 292.2 L364.2 292.0 L365.4 291.6 L366.6 291.4 L367.8 291.1 L369.0 290.7 L370.2 290.6 L371.4 290.3 L373.0 290.7 L374.5 291.2 L375.9 290.5 L377.3 289.4 L378.7 288.6 L380.0 288.3 L381.3 288.0 L382.6 288.0 L383.8 288.1 L385.1 287.8 L386.4 287.9 L387.7 288.0 L389.0 287.9 L390.4 288.2 L391.8 288.0 L393.2 288.4 L394.5 288.1 L395.9 287.2 L397.3 286.6 L398.7 286.1 L400.1 285.7 L401.4 285.2 L402.7 285.4 L403.9 285.8 L405.2 285.7 L406.4 285.7 L407.7 285.9 L408.9 285.8 L410.1 285.8 L411.4 286.3 L412.6 286.5 L413.9 286.1 L415.1 286.1 L416.4 286.0 L417.6 286.0 L418.8 285.9 L420.1 286.1 L421.5 285.9 L422.8 285.5 L424.2 285.1 L425.6 285.0 L427.0 284.8 L428.4 284.9 L429.7 285.1 L431.1 284.9 L432.5 284.6 L433.9 284.4 L435.3 284.3 L436.6 284.3 L438.0 284.3 L439.4 284.0 L440.8 284.0 L442.0 283.7 L443.2 283.3 L444.4 283.0 L445.6 282.7 L446.8 282.6 L448.0 282.2 L449.2 282.5 L450.4 282.6 L451.7 282.6 L452.9 282.8 L454.1 283.1 L455.3 283.0 L456.6 283.1 L457.9 283.1 L459.2 283.4 L460.4 283.6 L461.7 283.3 L463.0 283.5 L464.3 283.6 L465.6 283.3 L466.9 283.0 L468.1 282.6 L469.4 282.7 L470.6 282.5 L471.8 282.5 L473.1 281.9 L474.3 281.2 L475.6 280.6 L476.8 279.9 L478.0 279.0 L479.6 279.7 L481.2 280.0 L482.5 279.4 L483.9 279.2 L485.3 278.4 L486.7 278.5 L488.1 278.6 L489.4 279.3 L490.8 278.8 L492.1 278.3 L493.4 278.4 L494.8 277.9 L496.1 277.9 L497.4 277.7 L498.8 277.5 L500.0 277.6 L501.2 277.4 L502.5 277.4 L503.7 277.0 L505.0 277.1 L506.5 276.4 L508.1 275.7 L509.4 275.3 L510.7 275.4 L512.0 275.4 L512.0 275.0 L513.4 275.3 L514.8 275.7 L516.1 276.1 L517.5 275.7 L518.9 275.4 L520.3 275.2 L521.7 275.2 L523.0 275.2 L524.4 274.9 L525.7 274.1 L527.0 273.4 L528.3 272.6 L529.6 271.9 L530.9 271.4 L532.1 271.2 L533.4 271.2 L534.7 270.7 L535.9 270.5 L537.2 269.9 L538.5 269.7 L539.7 269.5 L541.0 269.1 L542.4 269.1 L543.7 269.1 L545.1 269.3 L546.5 269.5 L547.9 269.2 L549.3 269.1 L550.6 268.8 L551.9 268.4 L553.1 267.7 L554.4 267.0 L555.7 266.5 L557.0 265.7 L558.3 265.0 L559.6 264.3 L560.9 264.5 L562.3 264.5 L563.6 264.5 L564.9 264.7 L566.2 265.1 L567.7 266.2 L569.1 267.7 L570.6 269.0 L572.0 270.6 L573.3 271.7 L574.5 272.6 L575.8 273.5 L577.0 274.5 L578.2 275.7 L579.6 277.1 L580.9 278.4 L582.3 277.9 L583.7 277.4 L585.1 277.1 L586.5 276.4 L587.9 277.0 L589.3 277.2 L590.7 277.4 L592.1 277.6 L593.4 278.0 L594.8 278.4 L596.1 278.6 L597.4 278.9 L598.7 279.4 L600.0 279.9 L601.3 280.1 L602.6 280.6 L603.9 281.2 L605.2 281.3 L606.2 280.6 L607.2 279.9 L608.6 280.4 L610.0 280.8 L611.4 281.3 L612.8 281.6 L614.1 281.6 L615.5 281.6 L617.1 283.1 L618.6 284.6 L619.9 287.6 L621.1 290.7 L622.3 290.7 L623.6 290.2 L624.8 290.3 L626.0 291.7 L627.2 293.2 L628.4 294.9 L629.7 294.3 L631.0 293.9 L632.1 291.6 L633.1 288.9 L634.7 287.5 L636.2 286.3 L637.5 285.8 L638.7 284.8 L639.9 284.2 L641.2 283.7 L642.4 283.1 L643.5 284.5 L644.5 286.3 L645.9 286.4 L647.3 286.1 L648.6 286.0 L649.9 287.2 L651.1 288.7 L652.4 290.4 L653.5 289.6 L654.6 289.3 L655.8 288.9 L656.9 287.9 L658.5 288.7 L660.0 289.1 L661.3 288.7 L662.6 288.2 L663.9 287.5 L665.2 287.1 L666.8 285.8 L668.3 284.5 L669.3 284.8 L670.4 285.4 L671.4 288.0 L672.4 290.4 L673.5 290.2 L674.5 289.9 L676.1 293.6 L677.6 297.2 L679.3 306.3 L680.5 305.0 L681.8 303.6 L683.1 304.8 L684.5 306.3 L685.9 307.7 L687.3 308.5 L688.7 309.9 L690.0 310.9 L691.4 309.4 L692.8 308.5 L694.2 306.9 L695.7 306.5 L697.3 306.2 L698.5 300.8 L699.8 295.3 L701.1 295.4 L702.4 295.3 L703.7 295.1 L705.0 295.0 L706.6 299.0 L707.9 298.7 L709.1 298.4 L710.3 297.8 L711.6 297.4 L712.8 296.7 L713.9 298.2 L714.9 299.9 L716.4 298.1 L718.0 295.7 L719.2 296.0 L720.4 296.2 L721.6 296.8 L722.8 296.9 L724.0 297.2 L724.0 297.2 L725.0 297.8 L726.1 298.5 L727.3 304.3 L728.6 310.5 L729.7 310.4 L730.9 310.6 L732.1 310.6 L733.3 310.7 L734.7 309.0 L736.1 307.1 L737.5 304.8 L738.8 304.5 L740.0 304.4 L741.3 304.4 L742.6 304.3 L744.2 306.4 L745.7 308.3 L747.0 307.8 L748.2 307.5 L749.5 307.2 L750.7 307.1 L751.9 307.0 L753.3 305.5 L754.7 304.0 L756.1 302.9 L757.4 302.4 L758.8 302.4 L760.1 302.3 L761.4 302.2 L762.7 301.7 L764.1 301.4 L765.4 301.1 L766.8 301.6 L768.2 302.2 L769.5 302.6 L770.9 302.7 L772.3 303.3 L773.7 303.6 L775.1 304.6 L776.4 305.7 L777.8 306.2 L779.2 307.4 L780.6 308.5 L782.0 309.4 L783.2 309.4 L784.5 309.3 L785.7 309.1 L786.9 309.2 L788.2 309.0 L789.4 309.8 L790.7 310.7 L791.9 311.4 L793.1 312.1 L794.4 313.1 L795.7 312.3 L797.0 311.0 L798.3 310.2 L799.6 309.3 L800.9 310.7 L802.3 312.4 L803.7 314.0 L805.0 313.5 L806.4 313.3 L807.7 313.2 L809.0 312.6 L810.4 312.4 L811.7 312.0 L813.0 311.3 L814.3 312.3 L815.6 313.0 L816.9 313.9 L818.2 314.6 L819.2 313.9 L820.3 312.9 L821.8 313.9 L823.4 314.9 L824.6 314.3 L825.9 313.4 L827.1 312.8 L828.3 312.0 L829.6 311.0 L831.0 311.0 L832.3 311.1 L833.7 311.3 L835.1 311.4 L836.5 311.8 L837.9 312.2 L839.2 312.5 L840.5 312.7 L841.7 313.1 L843.0 313.2 L844.4 314.2 L845.8 315.4 L847.2 316.4 L848.2 315.6 L849.3 315.4 L850.5 316.5 L851.8 317.2 L853.1 318.0 L854.4 319.0 L855.8 318.2 L857.2 317.1 L858.6 316.0 L859.6 318.7 L860.6 317.8 L861.7 316.3 L862.9 317.1 L864.2 317.7 L865.4 318.3 L866.6 319.0 L867.9 319.8 L869.4 319.4 L871.0 319.0 L872.2 319.6 L873.5 320.3 L874.7 321.2 L876.0 321.7 L877.2 322.3 L878.6 323.1 L880.0 323.9 L881.3 324.8 L882.9 323.5 L884.4 322.6 L885.7 323.2 L887.0 323.6 L888.3 324.7 L889.6 325.1 L890.9 325.0 L892.1 325.2 L893.4 325.2 L894.6 325.5 L895.8 325.5 L897.1 325.1 L898.3 324.6 L899.6 324.7 L900.8 324.3 L902.0 324.3 L903.3 324.2 L904.6 324.5 L905.9 324.2 L907.2 324.1 L908.6 323.0 L910.0 322.2 L911.4 321.2 L912.7 321.0 L914.0 320.6 L915.2 320.8 L916.5 321.0 L917.7 320.6 L918.8 319.9 L920.0 319.4 L921.1 319.0 L922.3 321.3 L923.6 323.5 L924.8 325.7 L926.4 326.6 L927.9 327.4 L929.5 327.0 L931.0 327.1 L932.1 325.7 L933.1 324.5 L934.1 324.8" fill="none" stroke="#1a1a1a" stroke-width="0.95" stroke-linejoin="round"/>
<path d="M89.0 402.9 L90.4 403.1 L91.7 403.5 L93.0 403.7 L94.4 403.9 L95.7 404.3 L97.0 404.9 L98.4 405.3 L99.4 405.9 L100.4 406.2 L102.0 405.9 L103.5 405.5 L104.9 405.6 L106.2 405.8 L107.5 406.1 L108.9 406.8 L110.2 407.2 L111.5 407.6 L112.8 407.9 L114.4 408.2 L115.9 408.6 L117.5 408.2 L119.1 407.8 L120.3 408.0 L121.5 408.3 L122.8 408.1 L124.0 408.3 L125.3 408.6 L126.5 408.7 L127.8 408.7 L129.0 408.9 L130.2 408.9 L131.5 409.4 L132.7 410.1 L134.0 410.7 L135.2 411.1 L136.4 412.0 L137.7 412.5 L139.2 413.9 L140.8 415.2 L142.2 412.6 L143.6 412.9 L144.9 413.3 L146.2 413.6 L147.5 413.9 L148.8 414.3 L150.1 414.9 L151.4 414.8 L152.7 414.8 L154.0 415.2 L155.3 415.3 L156.3 416.7 L157.4 417.9 L158.9 417.7 L160.5 417.8 L161.8 417.8 L163.1 418.0 L164.5 418.1 L165.8 418.5 L167.1 418.6 L168.4 418.8 L169.8 419.3 L171.0 419.1 L172.2 419.0 L173.4 419.1 L174.6 418.7 L175.8 418.4 L177.0 418.3 L178.1 419.8 L179.1 421.1 L180.6 420.3 L182.2 419.5 L183.8 419.6 L185.3 419.9 L186.7 420.1 L188.1 420.7 L189.4 421.2 L190.8 420.7 L192.2 420.0 L193.6 419.4 L194.9 418.7 L196.2 418.3 L197.6 418.3 L198.9 418.1 L200.2 417.6 L201.6 417.5 L202.9 417.2 L203.9 418.3 L205.0 419.1 L206.0 417.6 L207.0 416.4 L208.6 417.5 L210.1 418.8 L211.7 417.7 L213.3 416.1 L214.6 416.9 L215.9 417.8 L217.1 417.4 L218.2 417.3 L219.4 416.8 L220.5 416.4 L221.5 415.0 L222.6 414.1 L224.1 415.1 L225.7 416.0 L227.1 414.9 L228.4 413.9 L229.8 413.0 L230.9 412.1 L231.9 410.7 L233.2 410.3 L234.4 410.1 L235.7 409.8 L236.9 409.9 L238.2 409.3 L239.5 409.1 L240.7 409.0 L242.0 408.6 L243.3 408.5 L244.5 407.9 L245.8 407.3 L247.0 406.8 L248.2 406.2 L249.5 405.8 L250.7 405.3 L252.0 405.1 L253.2 404.8 L254.5 404.3 L255.7 403.5 L256.9 403.1 L258.2 402.6 L259.4 402.2 L260.7 401.7 L261.9 401.7 L263.5 402.7 L265.0 403.8 L266.0 401.9 L267.1 399.6 L268.3 399.5 L269.6 399.1 L270.9 398.9 L272.1 398.6 L273.4 398.3 L274.7 398.0 L275.9 397.6 L277.2 397.0 L278.5 396.7 L279.7 396.7 L281.0 396.6 L282.3 396.5 L283.5 396.0 L284.8 395.8 L286.1 395.6 L287.3 395.4 L288.6 395.2 L289.9 394.8 L291.1 394.6 L292.4 394.4 L293.7 393.9 L294.9 393.9 L296.2 393.8 L297.5 393.2 L298.7 393.2 L300.0 393.1 L300.0 393.4 L301.3 392.8 L302.6 392.8 L304.0 392.2 L305.3 392.3 L306.6 392.0 L307.9 391.4 L309.2 391.1 L310.5 391.0 L311.9 390.8 L313.2 390.6 L314.5 390.5 L315.8 390.0 L317.1 389.5 L318.4 389.6 L319.8 389.1 L321.1 389.1 L322.4 388.6 L323.7 388.6 L325.0 388.5 L326.3 388.3 L327.7 388.0 L329.0 387.8 L330.5 386.5 L332.1 385.6 L333.6 385.2 L335.2 385.2 L336.6 385.8 L338.0 386.1 L339.3 386.6 L340.6 386.2 L341.8 386.0 L343.1 386.1 L344.3 386.1 L345.5 386.2 L347.1 385.6 L348.7 384.7 L350.0 385.1 L351.4 385.7 L352.8 386.1 L354.1 385.5 L355.4 385.3 L356.7 385.0 L358.0 384.3 L359.5 384.1 L361.1 383.7 L362.1 382.7 L363.1 381.3 L364.4 380.9 L365.7 380.6 L367.0 380.6 L368.3 380.0 L369.7 380.0 L371.1 380.3 L372.5 380.7 L373.8 380.7 L375.2 380.8 L376.6 381.1 L378.0 381.6 L379.4 381.8 L380.7 382.5 L382.0 382.2 L383.3 382.0 L384.6 382.1 L385.9 381.9 L387.2 381.9 L388.5 381.5 L389.8 381.6 L391.1 381.3 L392.5 380.9 L393.9 380.8 L395.2 380.6 L396.6 380.4 L398.0 380.5 L399.4 380.3 L400.8 380.2 L402.1 380.3 L403.5 380.6 L404.6 382.3 L405.6 382.2 L406.6 382.0 L407.7 380.4 L408.7 379.0 L410.2 378.8 L411.8 378.2 L413.5 380.4 L414.6 380.6 L415.7 380.5 L416.9 380.5 L418.0 380.5 L419.0 379.6 L420.1 379.1 L421.6 379.5 L423.2 380.1 L424.5 379.8 L425.8 379.8 L427.1 379.7 L428.4 379.5 L429.4 380.4 L430.4 381.2 L431.8 381.4 L433.2 381.3 L434.6 381.4 L435.6 382.2 L436.6 383.1 L438.3 378.9 L439.4 379.0 L440.6 378.6 L441.7 378.6 L442.9 378.2 L443.9 377.2 L444.9 376.1 L446.3 375.3 L447.7 374.2 L449.1 373.3 L450.4 373.5 L451.8 373.2 L453.2 373.3 L454.6 373.1 L456.0 373.0 L457.3 372.7 L458.6 372.1 L459.8 372.1 L461.1 371.7 L462.3 371.3 L463.6 370.9 L465.1 371.5 L466.7 371.6 L468.0 371.0 L469.4 370.3 L470.8 369.6 L472.2 369.4 L473.6 369.1 L474.9 368.9 L476.5 367.9 L478.0 367.3 L479.6 367.9 L481.2 368.5 L482.4 368.0 L483.7 367.6 L485.0 366.9 L486.3 366.7 L487.7 367.1 L489.1 367.8 L490.5 368.5 L491.8 368.0 L493.1 367.3 L494.4 366.6 L495.6 366.1 L496.9 366.5 L498.2 367.1 L499.5 367.5 L500.8 367.6 L502.2 366.9 L503.6 366.5 L505.0 365.8 L506.3 365.1 L507.7 364.2 L509.1 363.4 L510.6 363.1 L512.0 362.7 L512.0 362.8 L513.2 362.6 L514.5 362.7 L515.7 362.6 L517.0 362.3 L518.2 362.0 L519.9 366.3 L521.3 362.6 L522.9 362.9 L524.4 363.0 L525.7 363.6 L526.9 364.2 L528.1 365.0 L529.4 365.8 L530.6 366.9 L531.9 367.8 L533.2 368.5 L534.5 368.8 L535.8 369.4 L537.0 369.1 L538.2 369.1 L539.4 368.6 L540.6 368.5 L541.8 368.3 L543.1 368.0 L544.4 367.1 L545.8 365.8 L547.2 364.8 L548.4 365.0 L549.7 365.2 L550.9 365.4 L552.2 365.8 L553.4 366.1 L554.6 366.2 L555.9 366.9 L557.1 368.4 L558.4 368.0 L559.6 367.4 L560.8 368.3 L561.9 369.1 L563.0 370.1 L564.2 370.9 L565.6 370.5 L567.1 369.9 L568.5 369.5 L570.0 369.1 L571.3 367.3 L572.7 365.5 L574.1 363.6 L575.7 362.1 L577.2 360.3 L578.8 360.5 L580.3 361.0 L581.7 361.1 L583.1 360.7 L584.5 360.5 L585.5 359.4 L586.5 358.3 L588.2 361.3 L589.2 360.9 L590.3 360.6 L591.3 357.7 L592.5 358.0 L593.6 357.7 L594.8 358.1 L595.8 361.1 L597.2 360.7 L598.5 360.7 L599.6 359.3 L600.6 357.5 L602.0 357.5 L603.4 357.5 L604.8 357.6 L606.2 357.4 L607.2 360.3 L608.3 359.2 L609.3 357.8 L610.3 358.2 L611.4 358.6 L613.0 363.9 L614.5 358.4 L615.8 358.0 L617.1 357.5 L618.4 356.8 L619.7 356.5 L620.9 356.1 L622.1 355.3 L623.4 354.7 L624.6 354.3 L625.9 353.6 L627.1 353.1 L628.4 353.1 L629.6 352.9 L630.8 353.0 L632.1 352.9 L633.3 352.7 L634.6 352.8 L635.8 352.7 L637.0 352.4 L638.3 352.5 L639.5 353.3 L640.8 354.0 L642.0 354.6 L643.3 355.1 L644.5 355.7 L645.9 355.4 L647.3 355.2 L648.6 355.1 L649.9 354.5 L651.1 353.9 L652.4 353.6 L653.6 353.2 L654.9 352.8 L655.9 351.4 L657.5 353.3 L658.9 352.7 L660.3 352.0 L661.7 351.8 L663.1 351.5 L664.5 351.6 L665.8 351.4 L667.1 351.8 L668.5 351.9 L669.8 351.9 L671.1 351.7 L672.4 352.0 L674.0 351.2 L675.6 350.4 L676.9 349.8 L678.3 349.7 L679.7 349.2 L681.1 349.0 L682.5 348.7 L683.8 348.4 L685.5 351.0 L686.7 349.7 L688.0 348.5 L689.2 348.0 L690.5 347.8 L691.7 347.6 L692.9 347.2 L694.2 347.0 L695.6 348.0 L696.9 348.8 L698.3 349.5 L699.9 349.0 L701.4 348.8 L702.5 347.9 L703.5 347.0 L705.1 347.1 L706.6 347.1 L708.2 348.2 L709.7 349.9 L711.0 350.8 L712.2 351.3 L713.4 352.1 L714.7 352.7 L715.9 353.5 L717.3 353.5 L718.6 353.2 L720.0 353.2 L721.3 352.9 L722.7 352.8 L724.0 352.5 L724.0 352.5 L725.6 351.8 L727.1 351.4 L728.3 351.3 L729.5 351.7 L730.7 351.7 L731.9 352.2 L733.1 352.1 L734.4 352.1 L735.6 351.5 L736.8 351.3 L738.1 350.9 L739.3 350.5 L740.6 349.8 L741.9 350.2 L743.3 350.9 L744.7 351.6 L745.9 351.2 L747.2 350.2 L748.6 350.9 L749.9 352.0 L751.3 352.6 L752.7 353.7 L754.0 354.4 L755.2 354.2 L756.4 354.0 L757.6 353.8 L758.9 353.2 L760.1 353.2 L761.3 352.7 L762.6 352.9 L763.9 352.7 L765.1 353.0 L766.4 352.9 L767.7 352.9 L769.0 352.9 L770.3 353.0 L771.6 353.1 L772.9 353.7 L774.1 353.9 L775.3 354.0 L776.6 354.5 L777.8 354.4 L779.1 354.8 L780.3 355.6 L781.6 356.2 L782.8 356.7 L784.0 357.3 L785.1 360.6 L786.1 359.6 L787.1 358.4 L788.2 360.4 L789.2 362.6 L790.2 361.2 L791.3 360.0 L792.6 359.9 L793.9 360.1 L795.2 360.2 L796.5 360.2 L797.5 361.2 L798.5 362.4 L799.8 362.3 L801.0 362.1 L802.3 361.6 L803.5 362.8 L804.7 364.1 L806.0 363.4 L807.3 362.9 L808.6 362.1 L809.9 361.6 L811.1 361.7 L812.3 361.9 L813.5 362.2 L814.7 362.6 L816.0 362.5 L817.2 362.6 L818.7 363.7 L820.3 364.3 L821.6 363.2 L822.9 362.2 L824.2 361.6 L825.4 360.7 L826.5 362.0 L827.5 362.9 L828.6 362.0 L829.6 361.5 L831.0 362.2 L832.3 362.7 L833.7 363.0 L835.1 363.6 L836.5 364.1 L837.9 364.6 L839.4 366.2 L841.0 367.6 L842.3 367.8 L843.6 368.3 L844.9 368.7 L846.1 368.9 L847.7 367.9 L849.3 367.1 L850.5 368.0 L851.8 369.1 L853.1 369.8 L854.4 370.8 L855.7 371.2 L857.0 371.4 L858.3 371.9 L859.6 372.4 L860.9 372.9 L862.2 373.4 L863.5 373.5 L864.8 374.0 L866.2 374.6 L867.5 374.9 L868.9 375.1 L870.3 375.6 L871.7 376.0 L873.1 376.6 L874.7 380.1 L876.0 378.7 L877.2 377.0 L878.6 377.4 L880.0 377.9 L881.3 378.2 L882.9 379.3 L884.4 380.2 L886.0 381.0 L887.6 381.9 L888.6 381.3 L889.6 380.7 L890.9 380.7 L892.2 380.9 L893.5 380.6 L894.8 380.7 L896.1 380.5 L897.4 380.8 L898.7 380.8 L900.0 381.0 L901.4 380.8 L902.7 381.0 L904.1 381.1 L905.5 381.0 L906.9 381.3 L908.3 381.6 L909.6 381.6 L911.0 382.2 L912.4 382.6 L913.4 383.6 L914.5 384.6 L915.8 384.4 L917.1 384.2 L918.4 384.3 L919.6 384.5 L921.0 385.0 L922.4 385.8 L923.8 386.4 L924.8 386.0 L925.9 385.7 L927.1 386.4 L928.4 386.8 L929.7 387.3 L931.0 387.7 L932.3 388.7 L933.5 389.9 L934.8 390.7" fill="none" stroke="#1a1a1a" stroke-width="0.95" stroke-linejoin="round"/>
<path d="M88.5 466.5H935.5" stroke="#0000ff" stroke-width="1"/>
<path d="M89.0 585.8 L89.0 548.9 L106.6 555.7 L107.3 558.8 L108.1 556.3 L131.9 565.6 L133.1 581.6 L143.5 582.0 L144.9 570.6 L162.5 575.8 L164.0 582.6 L183.2 583.6 L184.3 582.6 L185.3 583.6 L189.4 582.6 L191.5 582.2 L193.6 583.6 L198.8 583.6 L199.8 583.0 L201.9 584.3 L212.2 585.1 L226.7 585.9 L226.7 585.8Z" fill="url(#bars)" stroke="none"/>
<path d="M524.4 585.8 L524.4 585.9 L536.8 585.3 L549.3 584.7 L561.3 583.0 L563.8 577.0 L570.0 572.7 L580.3 567.7 L590.7 562.3 L596.9 560.4 L601.0 559.4 L604.1 559.8 L605.6 564.0 L607.6 557.8 L610.3 554.7 L623.8 548.4 L630.0 546.8 L646.6 539.1 L667.3 531.9 L688.0 525.7 L708.7 520.9 L721.1 518.0 L722.3 522.6 L723.2 516.4 L724.0 516.8 L724.0 516.8 L732.3 517.4 L736.4 515.3 L748.8 513.9 L757.1 514.3 L758.2 519.5 L759.2 513.9 L769.5 512.8 L779.9 513.7 L782.6 522.6 L783.6 542.9 L785.1 514.3 L792.3 515.9 L800.6 514.3 L806.8 514.7 L815.1 516.4 L821.3 516.8 L823.0 522.6 L824.4 517.4 L829.6 519.5 L835.8 521.5 L846.1 522.1 L848.2 524.6 L856.5 523.2 L858.2 529.8 L859.6 523.6 L868.9 527.7 L874.1 530.8 L877.2 528.4 L889.6 532.9 L902.0 538.5 L914.5 542.9 L926.9 546.4 L934.1 549.5 L934.1 585.8Z" fill="url(#bars)" stroke="none"/>
<path d="M111.0 509.4v2.2" stroke="#333" stroke-width="1"/>
<text x="111.00" y="517.90" font-size="8.60" fill="#9b18f2" text-anchor="middle" textLength="10.14" lengthAdjust="spacingAndGlyphs" stroke="#9b18f2" stroke-width="0.2">25</text>
<path d="M162.0 509.4v2.2" stroke="#333" stroke-width="1"/>
<text x="162.00" y="517.90" font-size="8.60" fill="#9b18f2" text-anchor="middle" textLength="10.14" lengthAdjust="spacingAndGlyphs" stroke="#9b18f2" stroke-width="0.2">26</text>
<path d="M602.0 509.4v2.2" stroke="#333" stroke-width="1"/>
<text x="602.00" y="517.90" font-size="8.60" fill="#9b18f2" text-anchor="middle" textLength="5.07" lengthAdjust="spacingAndGlyphs" stroke="#9b18f2" stroke-width="0.2">1</text>
<path d="M627.5 509.4v2.2" stroke="#333" stroke-width="1"/>
<text x="627.50" y="517.90" font-size="8.60" fill="#9b18f2" text-anchor="middle" textLength="5.07" lengthAdjust="spacingAndGlyphs" stroke="#9b18f2" stroke-width="0.2">2</text>
<path d="M646.6 509.4v2.2" stroke="#333" stroke-width="1"/>
<text x="646.60" y="517.90" font-size="8.60" fill="#9b18f2" text-anchor="middle" textLength="5.07" lengthAdjust="spacingAndGlyphs" stroke="#9b18f2" stroke-width="0.2">3</text>
<path d="M662.3 509.4v2.2" stroke="#333" stroke-width="1"/>
<text x="662.30" y="517.90" font-size="8.60" fill="#9b18f2" text-anchor="middle" textLength="5.07" lengthAdjust="spacingAndGlyphs" stroke="#9b18f2" stroke-width="0.2">4</text>
<path d="M677.2 509.4v2.2" stroke="#333" stroke-width="1"/>
<text x="677.20" y="517.90" font-size="8.60" fill="#9b18f2" text-anchor="middle" textLength="5.07" lengthAdjust="spacingAndGlyphs" stroke="#9b18f2" stroke-width="0.2">5</text>
<path d="M691.3 509.4v2.2" stroke="#333" stroke-width="1"/>
<text x="691.30" y="517.90" font-size="8.60" fill="#9b18f2" text-anchor="middle" textLength="5.07" lengthAdjust="spacingAndGlyphs" stroke="#9b18f2" stroke-width="0.2">6</text>
<path d="M704.5 509.4v2.2" stroke="#333" stroke-width="1"/>
<path d="M716.3 509.4v2.2" stroke="#333" stroke-width="1"/>
<text x="716.30" y="517.90" font-size="8.60" fill="#9b18f2" text-anchor="middle" textLength="5.07" lengthAdjust="spacingAndGlyphs" stroke="#9b18f2" stroke-width="0.2">8</text>
<path d="M728.5 509.4v2.2" stroke="#333" stroke-width="1"/>
<path d="M740.0 509.4v2.2" stroke="#333" stroke-width="1"/>
<text x="740.00" y="517.90" font-size="8.60" fill="#9b18f2" text-anchor="middle" textLength="10.14" lengthAdjust="spacingAndGlyphs" stroke="#9b18f2" stroke-width="0.2">10</text>
<path d="M751.8 509.4v2.2" stroke="#333" stroke-width="1"/>
<path d="M763.3 509.4v2.2" stroke="#333" stroke-width="1"/>
<text x="763.30" y="517.90" font-size="8.60" fill="#9b18f2" text-anchor="middle" textLength="10.14" lengthAdjust="spacingAndGlyphs" stroke="#9b18f2" stroke-width="0.2">12</text>
<path d="M774.6 509.4v2.2" stroke="#333" stroke-width="1"/>
<path d="M786.0 509.4v2.2" stroke="#333" stroke-width="1"/>
<text x="786.00" y="517.90" font-size="8.60" fill="#9b18f2" text-anchor="middle" textLength="10.14" lengthAdjust="spacingAndGlyphs" stroke="#9b18f2" stroke-width="0.2">14</text>
<path d="M797.5 509.4v2.2" stroke="#333" stroke-width="1"/>
<path d="M809.5 509.4v2.2" stroke="#333" stroke-width="1"/>
<text x="809.50" y="517.90" font-size="8.60" fill="#9b18f2" text-anchor="middle" textLength="10.14" lengthAdjust="spacingAndGlyphs" stroke="#9b18f2" stroke-width="0.2">16</text>
<path d="M821.3 509.4v2.2" stroke="#333" stroke-width="1"/>
<path d="M833.3 509.4v2.2" stroke="#333" stroke-width="1"/>
<text x="833.30" y="517.90" font-size="8.60" fill="#9b18f2" text-anchor="middle" textLength="10.14" lengthAdjust="spacingAndGlyphs" stroke="#9b18f2" stroke-width="0.2">18</text>
<path d="M845.5 509.4v2.2" stroke="#333" stroke-width="1"/>
<path d="M858.0 509.4v2.2" stroke="#333" stroke-width="1"/>
<text x="858.00" y="517.90" font-size="8.60" fill="#9b18f2" text-anchor="middle" textLength="10.14" lengthAdjust="spacingAndGlyphs" stroke="#9b18f2" stroke-width="0.2">20</text>
<path d="M872.0 509.4v2.2" stroke="#333" stroke-width="1"/>
<path d="M887.0 509.4v2.2" stroke="#333" stroke-width="1"/>
<text x="887.00" y="517.90" font-size="8.60" fill="#9b18f2" text-anchor="middle" textLength="10.14" lengthAdjust="spacingAndGlyphs" stroke="#9b18f2" stroke-width="0.2">22</text>
<path d="M903.0 509.4v2.2" stroke="#333" stroke-width="1"/>
<path d="M921.0 509.4v2.2" stroke="#333" stroke-width="1"/>
<text x="921.00" y="517.90" font-size="8.60" fill="#9b18f2" text-anchor="middle" textLength="10.14" lengthAdjust="spacingAndGlyphs" stroke="#9b18f2" stroke-width="0.2">24</text>
<path d="M336.6 509.4v2.2" stroke="#333" stroke-width="1"/>
<text x="294.90" y="517.60" font-size="8.80" fill="#9b18f2" text-anchor="start" textLength="84.70" lengthAdjust="spacingAndGlyphs" stroke="#9b18f2" stroke-width="0.2">Sum of previous day</text>
<text x="288.30" y="528.80" font-size="8.80" fill="#9b18f2" text-anchor="start" textLength="98.10" lengthAdjust="spacingAndGlyphs" stroke="#9b18f2" stroke-width="0.2">&lt;--- 26.17 MJoules/m^2</text>
<path d="M89.2 589.0V598" stroke="#262626" stroke-width="1"/>
<path d="M195.1 589.0V593.5" stroke="#262626" stroke-width="1"/>
<text x="194.90" y="609.20" font-size="8.60" fill="#000" text-anchor="middle" textLength="14.56" lengthAdjust="spacingAndGlyphs" stroke="#000" stroke-width="0.25">03z</text>
<path d="M301.0 589.0V593.5" stroke="#262626" stroke-width="1"/>
<text x="300.80" y="609.20" font-size="8.60" fill="#000" text-anchor="middle" textLength="14.56" lengthAdjust="spacingAndGlyphs" stroke="#000" stroke-width="0.25">06z</text>
<path d="M406.9 589.0V593.5" stroke="#262626" stroke-width="1"/>
<text x="406.70" y="609.20" font-size="8.60" fill="#000" text-anchor="middle" textLength="14.56" lengthAdjust="spacingAndGlyphs" stroke="#000" stroke-width="0.25">09z</text>
<path d="M512.8 589.0V593.5" stroke="#262626" stroke-width="1"/>
<text x="512.60" y="609.20" font-size="8.60" fill="#000" text-anchor="middle" textLength="14.56" lengthAdjust="spacingAndGlyphs" stroke="#000" stroke-width="0.25">12z</text>
<path d="M618.7 589.0V593.5" stroke="#262626" stroke-width="1"/>
<text x="618.50" y="609.20" font-size="8.60" fill="#000" text-anchor="middle" textLength="14.56" lengthAdjust="spacingAndGlyphs" stroke="#000" stroke-width="0.25">15z</text>
<path d="M724.6 589.0V593.5" stroke="#262626" stroke-width="1"/>
<text x="724.40" y="609.20" font-size="8.60" fill="#000" text-anchor="middle" textLength="14.56" lengthAdjust="spacingAndGlyphs" stroke="#000" stroke-width="0.25">18z</text>
<path d="M830.5 589.0V593.5" stroke="#262626" stroke-width="1"/>
<text x="830.30" y="609.20" font-size="8.60" fill="#000" text-anchor="middle" textLength="14.56" lengthAdjust="spacingAndGlyphs" stroke="#000" stroke-width="0.25">21z</text>
<text x="89.70" y="613.80" font-size="12.80" fill="#ff0000" text-anchor="middle" textLength="41.80" lengthAdjust="spacing">13May</text>
<text x="89.90" y="630.70" font-size="12.80" fill="#ff0000" text-anchor="middle" textLength="22.60" lengthAdjust="spacing">00z</text>
<text x="937.00" y="613.80" font-size="12.80" fill="#ff0000" text-anchor="middle" textLength="41.80" lengthAdjust="spacing">14May</text>
<text x="937.00" y="630.70" font-size="12.80" fill="#ff0000" text-anchor="middle" textLength="22.60" lengthAdjust="spacing">00z</text>
<text x="269.60" y="664.90" font-size="16.60" fill="#0000ff" text-anchor="start" textLength="483.80" lengthAdjust="spacingAndGlyphs">UW Rooftop Data for 20140512  to  20140513 @ 23:58:23  (UTC)</text>
</svg>
</body></html>
